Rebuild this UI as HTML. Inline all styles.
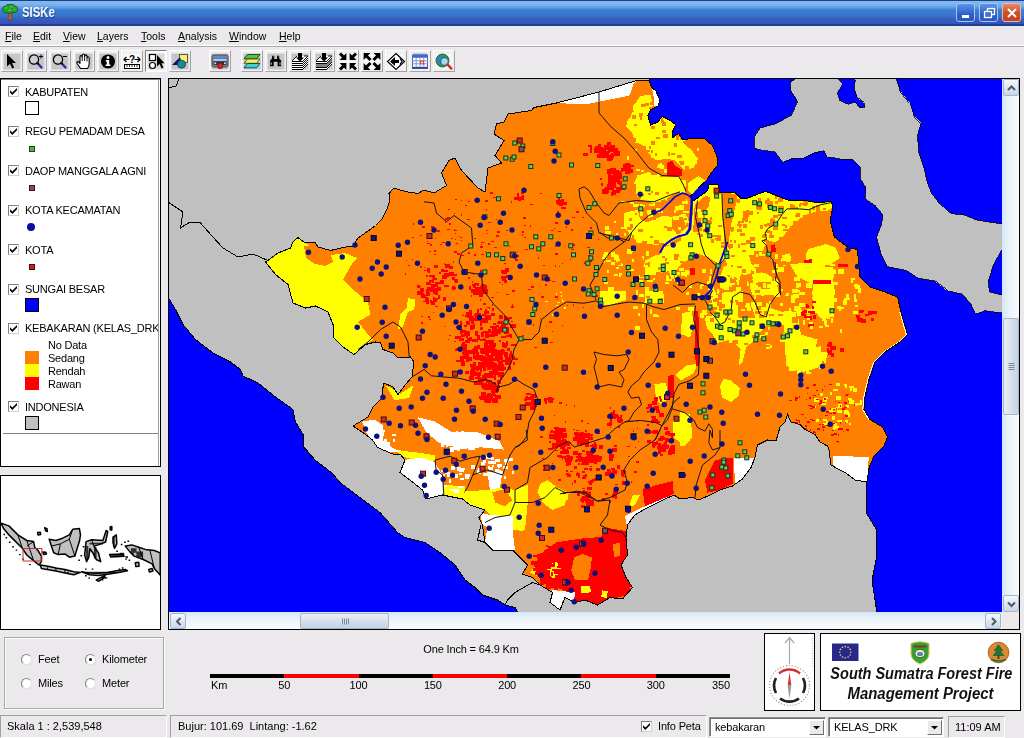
<!DOCTYPE html>
<html>
<head>
<meta charset="utf-8">
<title>SISKe</title>
<style>
html,body{margin:0;padding:0;}
body{width:1024px;height:738px;overflow:hidden;background:#ece9ec;font-family:"Liberation Sans",sans-serif;font-size:11px;color:#000;position:relative;}
.abs{position:absolute;}
#title{left:0;top:0;width:1024px;height:26px;background:linear-gradient(to bottom,#1e3e8c 0px,#1e3e8c 1px,#80bcee 1px,#78b2ec 5px,#5a9ae6 8px,#3c80d2 10px,#3472c8 17px,#3a5ec2 18.5px,#3454b4 24px,#1e3e94 24px,#1e3e94 26px);}
#title .cap{left:22px;top:4px;font-family:"Liberation Sans",sans-serif;font-weight:bold;font-size:14px;color:#fff;text-shadow:1px 1px 1px #1a3c8c;transform:scaleX(0.81);transform-origin:0 0;}
#menu{left:0;top:26px;width:1024px;height:20px;background:#ece9ec;}
#menu span{position:absolute;top:3.5px;font-size:10.5px;}
#menu u{text-decoration:underline;}
#mline{left:0;top:45px;width:1024px;height:1px;background:#fff;box-shadow:0 1px 0 #aaa8aa;}
.tb{position:absolute;top:50px;width:22px;height:22px;background:#f0eef0;border:1px solid;border-color:#fff #a4a4a4 #a4a4a4 #fff;box-sizing:border-box;}
.tb svg{position:absolute;left:0;top:0.5px;}
.panel{position:absolute;background:#fff;border:1px solid #000;box-sizing:border-box;}
.lg{position:absolute;left:24px;font-size:11px;white-space:nowrap;letter-spacing:-0.22px;margin-top:1px;}
.cb{position:absolute;left:7px;width:9px;height:9px;margin-top:1px;background:#fff;border:1px solid;border-color:#808080 #d4d0c8 #d4d0c8 #808080;}
.cb svg{position:absolute;left:0px;top:0px;}
.sw{position:absolute;left:24px;width:12px;height:12px;border:1px solid #000;box-sizing:border-box;}
.rad{position:absolute;width:11px;height:11px;border-radius:50%;background:#fff;border:1px solid;border-color:#808080 #e0e0e0 #e0e0e0 #808080;box-sizing:border-box;}
.st{position:absolute;top:715px;height:23px;border:1px solid;border-color:#a0a0a0 #fff #fff #a0a0a0;box-sizing:border-box;background:#ece9ec;}
.st span{position:absolute;top:4px;font-size:11px;white-space:nowrap;}
.lb{font-size:11px;white-space:nowrap;letter-spacing:-0.15px;}
.lt{position:absolute;left:0;width:199px;text-align:center;font-weight:bold;font-style:italic;font-size:16px;white-space:nowrap;color:#111;}
.tbp{background:#fafafa;border-color:#808080 #fff #fff #808080;}
.sbb{position:absolute;width:16px;height:16px;box-sizing:border-box;border:1px solid #a8b4c8;border-radius:2px;background:linear-gradient(to bottom,#f4f8fc,#c8d6e8);overflow:hidden;}
.sbb svg{position:absolute;left:0;top:0;}
.wb{top:3px;width:19px;height:19px;box-sizing:border-box;border:1px solid #a8c4f0;border-radius:3px;background:linear-gradient(to bottom,#5c94e8,#2c60c8 60%,#2858c0);overflow:hidden}
#menu,#legend,#bottom,#title .cap{will-change:transform;}
</style>
</head>
<body>
<!-- TITLE -->
<div id="title" class="abs">
<svg class="abs" style="left:1px;top:3px" width="18" height="18" viewBox="0 0 18 18"><path d="M8 9 L7 17 H11 L10.3 9 Z" fill="#b06830" stroke="#603010" stroke-width="0.6"/><path d="M1.5 7 Q1 3.5 4.5 3 Q6 0.8 9 1.5 Q12.5 0.5 14 3 Q17.5 3.5 16.5 7.5 Q15.5 10.5 12 9.5 Q9 11 6.5 9.8 Q2.5 10.5 1.5 7Z" fill="#28a028" stroke="#0c500c" stroke-width="0.7"/><path d="M4 5.5 Q5 4 6.5 5 M9 4 Q10.5 3 11.5 4.5 M7 7.5 Q8.5 6.5 10 7.5 M12.5 6.5 Q13.5 5.5 14.5 6.8" stroke="#70d860" stroke-width="0.9" fill="none"/></svg><span class="cap abs">SISKe</span>
<div class="abs wb" style="left:956px;"><div class="abs" style="left:5px;top:11px;width:7px;height:3px;background:#fff"></div></div>
<div class="abs wb" style="left:979px;"><svg width="19" height="19" class="abs" style="left:0;top:0"><rect x="7.5" y="4.5" width="7" height="6" fill="none" stroke="#fff" stroke-width="1.3"/><rect x="4.5" y="7.5" width="7" height="6" fill="#3c74d0" stroke="#fff" stroke-width="1.3"/></svg></div>
<div class="abs wb" style="left:1002px;background:linear-gradient(to bottom,#e88868,#d0502c 50%,#c04020);border-color:#f0b8a0;"><svg width="19" height="19" class="abs" style="left:0;top:0"><path d="M5 5 L13 13 M13 5 L5 13" stroke="#fff" stroke-width="2"/></svg></div>
</div>
<!-- MENU -->
<div id="menu" class="abs">
<span style="left:5px"><u>F</u>ile</span>
<span style="left:33px"><u>E</u>dit</span>
<span style="left:63px"><u>V</u>iew</span>
<span style="left:97px"><u>L</u>ayers</span>
<span style="left:141px"><u>T</u>ools</span>
<span style="left:178px"><u>A</u>nalysis</span>
<span style="left:229px"><u>W</u>indow</span>
<span style="left:279px"><u>H</u>elp</span>
</div>
<div id="mline" class="abs"></div>
<!-- TOOLBAR -->
<div id="toolbar">
<div class="tb" style="left:1px"><svg width="20" height="19" viewBox="0 0 20 19"><rect x="1.5" y="1.5" width="17" height="16" fill="#c6c6c6"/><path d="M5 2 L5 14.5 L8 11.8 L10.2 16.5 L12.2 15.6 L10 11 L14 11 Z" fill="#000"/></svg></div>
<div class="tb" style="left:25px"><svg width="20" height="19" viewBox="0 0 20 19"><rect x="1.5" y="1.5" width="17" height="16" fill="#c6c6c6"/><circle cx="8" cy="7.5" r="4.6" fill="#d0d0d0" stroke="#000" stroke-width="1.3"/><path d="M11.2 10.8 L15.5 15.5" stroke="#2828a0" stroke-width="2.2" stroke-linecap="round"/><path d="M11 10.6 L12.5 12.2" stroke="#000" stroke-width="1.6"/><path d="M13 4.5 H17 M15 2.5 V6.5" stroke="#000" stroke-width="1"/></svg></div>
<div class="tb" style="left:49px"><svg width="20" height="19" viewBox="0 0 20 19"><rect x="1.5" y="1.5" width="17" height="16" fill="#c6c6c6"/><circle cx="8" cy="7.5" r="4.6" fill="#d0d0d0" stroke="#000" stroke-width="1.3"/><path d="M11.2 10.8 L15.5 15.5" stroke="#2828a0" stroke-width="2.2" stroke-linecap="round"/><path d="M11 10.6 L12.5 12.2" stroke="#000" stroke-width="1.6"/><path d="M13 4.5 H17" stroke="#000" stroke-width="1"/></svg></div>
<div class="tb" style="left:73px"><svg width="20" height="19" viewBox="0 0 20 19"><rect x="1.5" y="1.5" width="17" height="16" fill="#c6c6c6"/><path d="M6.5 16.5 L3.2 11.5 Q2.4 9.8 3.8 9.6 Q5 9.6 6 11.5 L6 5 Q6 3.6 7.1 3.6 Q8.2 3.6 8.2 5 L8.2 3.4 Q8.3 2 9.4 2 Q10.6 2 10.6 3.4 L10.7 4.2 Q10.8 2.9 11.9 2.9 Q13 3 13 4.4 L13 5.8 Q13.2 4.7 14.2 4.8 Q15.2 5 15.2 6.4 L15.2 11.5 Q15.2 14 13.6 16.5 Z" fill="#fff" stroke="#000" stroke-width="1.1" stroke-linejoin="round"/><path d="M8.2 5 V9 M10.6 4 V9 M13 5.6 V9.4" stroke="#000" stroke-width="0.9"/></svg></div>
<div class="tb" style="left:97px"><svg width="20" height="19" viewBox="0 0 20 19"><rect x="1.5" y="1.5" width="17" height="16" fill="#c6c6c6"/><circle cx="10" cy="9.5" r="7" fill="#000"/><circle cx="10" cy="5.6" r="1.5" fill="#fff"/><path d="M7.8 8 H11.2 V12.6 H12.4 V14 H7.6 V12.6 H8.8 V9.4 H7.8 Z" fill="#fff"/></svg></div>
<div class="tb" style="left:121px"><svg width="20" height="19" viewBox="0 0 20 19"><rect x="1.5" y="1.5" width="17" height="16" fill="#f8f8f8"/><path d="M2 7.5 H7.5 M12.5 7.5 H18" stroke="#000" stroke-width="1.2"/><path d="M4.5 5 L2 7.5 L4.5 10 M15.5 5 L18 7.5 L15.5 10" fill="none" stroke="#000" stroke-width="1.2"/><text x="10" y="10.5" font-family="Liberation Sans,sans-serif" font-weight="bold" font-size="10" text-anchor="middle" fill="#000">?</text><rect x="2.5" y="12.5" width="15" height="4" fill="#fff" stroke="#000" stroke-width="1"/><path d="M5 12.5 V15 M7.5 12.5 V15 M10 12.5 V15 M12.5 12.5 V15 M15 12.5 V15" stroke="#000" stroke-width="0.8"/></svg></div>
<div class="tb tbp" style="left:145px"><svg width="20" height="19" viewBox="0 0 20 19"><rect x="1.5" y="1.5" width="17" height="16" fill="#d8d8d8"/><rect x="3.5" y="2.5" width="6" height="6" fill="#fff" stroke="#000" stroke-width="1.2"/><circle cx="6.5" cy="13.5" r="3" fill="#fff" stroke="#000" stroke-width="1.2"/><path d="M11 3 L11 14.5 L13.6 12 L15.6 16.5 L17.4 15.6 L15.4 11.3 L18.6 11.3 Z" fill="#000"/></svg></div>
<div class="tb" style="left:169px"><svg width="20" height="19" viewBox="0 0 20 19"><rect x="1.5" y="1.5" width="17" height="16" fill="#c6c6c6"/><rect x="9.5" y="2.5" width="8" height="8" fill="#f4f080" stroke="#404000" stroke-width="0.8"/><path d="M2 13 L10 5 L12 13 Z" fill="#101070"/><circle cx="11.5" cy="12.2" r="4" fill="#1c8c94" stroke="#0a3c50" stroke-width="0.8"/></svg></div>
<div class="tb" style="left:209px"><svg width="20" height="19" viewBox="0 0 20 19"><rect x="1.5" y="1.5" width="17" height="16" fill="#c6c6c6"/><rect x="2" y="3" width="16" height="12" rx="1.5" fill="#8c8c94" stroke="#404048" stroke-width="1"/><rect x="3.5" y="4.5" width="13" height="4.5" fill="#4c86d8"/><rect x="3.5" y="7" width="13" height="2.2" fill="#a8c8f0"/><rect x="3.5" y="9.2" width="13" height="4" fill="#30303c"/><rect x="8" y="11" width="4.5" height="5.5" rx="1" fill="#d02828" stroke="#600" stroke-width="0.6"/><circle cx="5.3" cy="11.3" r="1" fill="#ddd"/><circle cx="15" cy="11.3" r="1" fill="#ddd"/></svg></div>
<div class="tb" style="left:241px"><svg width="20" height="19" viewBox="0 0 20 19"><rect x="1.5" y="1.5" width="17" height="16" fill="#c6c6c6"/><path d="M5.5 2.5 H18 L14.5 6.8 H2 Z" fill="#58c058" stroke="#0a400a" stroke-width="0.9"/><path d="M5.5 7 H18 L14.5 11.3 H2 Z" fill="#f0f060" stroke="#505000" stroke-width="0.9"/><path d="M5.5 11.5 H18 L14.5 15.8 H2 Z" fill="#40d0d8" stroke="#004850" stroke-width="0.9"/></svg></div>
<div class="tb" style="left:265px"><svg width="20" height="19" viewBox="0 0 20 19"><rect x="1.5" y="1.5" width="17" height="16" fill="#c6c6c6"/><path d="M6.1 3.8 H8.3 V6.5 L7.7 7.1 H11.6 L11 6.5 V3.8 H13.2 V6.5 L15.1 8.5 V14.2 H11.6 V9.8 H7.7 V14.2 H4.1 V8.5 L6.1 6.5 Z" fill="#000"/><path d="M5.2 10.5 V12.8 M14 10.5 V12.8" stroke="#fff" stroke-width="0.8"/><path d="M7 4.6 H7.6 M11.8 4.6 H12.4" stroke="#fff" stroke-width="0.6"/></svg></div>
<div class="tb" style="left:289px"><svg width="20" height="19" viewBox="0 0 20 19"><rect x="1.5" y="1.5" width="17" height="16" fill="#c6c6c6"/><g shape-rendering="crispEdges"><path d="M2 9 L7 4 H18 V12 L13 17 H2 Z" fill="#fff"/><path d="M2 9 H13" fill="none" stroke="#000" stroke-width="1"/><path d="M2 11 H13" fill="none" stroke="#000" stroke-width="1"/><path d="M2 13 H13" fill="none" stroke="#000" stroke-width="1"/><path d="M2 15 H13" fill="none" stroke="#000" stroke-width="1"/><path d="M2 17 H13" fill="none" stroke="#000" stroke-width="1"/></g><path d="M13 9 L18 4" fill="none" stroke="#000" stroke-width="0.9"/><path d="M13 11 L18 6" fill="none" stroke="#000" stroke-width="0.9"/><path d="M13 13 L18 8" fill="none" stroke="#000" stroke-width="0.9"/><path d="M13 15 L18 10" fill="none" stroke="#000" stroke-width="0.9"/><path d="M13 17 L18 12" fill="none" stroke="#000" stroke-width="0.9"/><path d="M2 9 L7 4 M14 4 H18" fill="none" stroke="#000" stroke-width="0.9"/><path d="M8 1 H12 V5.5 H14 L10 9.5 L6 5.5 H8 Z" fill="#000"/></svg></div>
<div class="tb" style="left:313px"><svg width="20" height="19" viewBox="0 0 20 19"><rect x="1.5" y="1.5" width="17" height="16" fill="#c6c6c6"/><g shape-rendering="crispEdges"><path d="M2 9 L7 4 H18 V12 L13 17 H2 Z" fill="#fff"/><path d="M2 11 H13 L18 6 V10 L13 15 H2 Z" fill="#808080"/><path d="M2 9 H13" fill="none" stroke="#000" stroke-width="1"/><path d="M2 11 H13" fill="none" stroke="#000" stroke-width="1"/><path d="M2 15 H13" fill="none" stroke="#000" stroke-width="1"/><path d="M2 17 H13" fill="none" stroke="#000" stroke-width="1"/></g><path d="M13 9 L18 4" fill="none" stroke="#000" stroke-width="0.9"/><path d="M13 11 L18 6" fill="none" stroke="#000" stroke-width="0.9"/><path d="M13 15 L18 10" fill="none" stroke="#000" stroke-width="0.9"/><path d="M13 17 L18 12" fill="none" stroke="#000" stroke-width="0.9"/><path d="M2 9 L7 4 M14 4 H18" fill="none" stroke="#000" stroke-width="0.9"/><path d="M8 1 H12 V5.5 H14 L10 9.5 L6 5.5 H8 Z" fill="#000"/></svg></div>
<div class="tb" style="left:337px"><svg width="20" height="19" viewBox="0 0 20 19"><rect x="1.5" y="1.5" width="17" height="16" fill="#f6f6f6"/><path d="M2 1.5 L6 5.5" stroke="#000" stroke-width="3"/><path d="M8.4 7.9 L1.6 7.9 L8.4 1.1 Z" fill="#000"/><path d="M18 1.5 L14 5.5" stroke="#000" stroke-width="3"/><path d="M11.6 7.9 L18.4 7.9 L11.6 1.1 Z" fill="#000"/><path d="M2 17.5 L6 13.5" stroke="#000" stroke-width="3"/><path d="M8.4 11.1 L1.6 11.1 L8.4 17.9 Z" fill="#000"/><path d="M18 17.5 L14 13.5" stroke="#000" stroke-width="3"/><path d="M11.6 11.1 L18.4 11.1 L11.6 17.9 Z" fill="#000"/></svg></div>
<div class="tb" style="left:361px"><svg width="20" height="19" viewBox="0 0 20 19"><rect x="1.5" y="1.5" width="17" height="16" fill="#f6f6f6"/><path d="M8.5 8 L4 3.5" stroke="#000" stroke-width="3"/><path d="M1.6 1.1 L8.4 1.1 L1.6 7.9 Z" fill="#000"/><path d="M11.5 8 L16 3.5" stroke="#000" stroke-width="3"/><path d="M18.4 1.1 L11.6 1.1 L18.4 7.9 Z" fill="#000"/><path d="M8.5 11 L4 15.5" stroke="#000" stroke-width="3"/><path d="M1.6 17.9 L8.4 17.9 L1.6 11.1 Z" fill="#000"/><path d="M11.5 11 L16 15.5" stroke="#000" stroke-width="3"/><path d="M18.4 17.9 L11.6 17.9 L18.4 11.1 Z" fill="#000"/></svg></div>
<div class="tb" style="left:385px"><svg width="20" height="19" viewBox="0 0 20 19"><rect x="1.5" y="1.5" width="17" height="16" fill="#f6f6f6"/><path d="M10 1.5 L18.5 9.5 L10 17.5 L1.5 9.5 Z" fill="#fff" stroke="#000" stroke-width="1.2"/><path d="M4 9.5 L9 5 V8 H13 V11 H9 V14 Z" fill="#000"/><path d="M14 6.5 L16 9.5 L14 12.5" fill="none" stroke="#000" stroke-width="1.2"/></svg></div>
<div class="tb" style="left:409px"><svg width="20" height="19" viewBox="0 0 20 19"><rect x="1.5" y="1.5" width="17" height="16" fill="#f6f6f6"/><rect x="2.5" y="3" width="15" height="13.5" fill="#fff" stroke="#5068a8" stroke-width="1"/><rect x="2.5" y="3" width="15" height="2.8" fill="#3c6cd0"/><path d="M3.5 2.2 H16.5" stroke="#4a5c90" stroke-width="1.4" stroke-dasharray="1 1"/><rect x="2.5" y="14.8" width="15" height="2" fill="#2c4ca0"/><path d="M2.5 8.8 H17.5 M2.5 11.8 H17.5 M6.2 5.8 V14.8 M10 5.8 V14.8 M13.8 5.8 V14.8" stroke="#8098d0" stroke-width="1"/><rect x="10.6" y="9.2" width="3" height="2.6" fill="#fff" stroke="#e03030" stroke-width="1"/></svg></div>
<div class="tb" style="left:433px"><svg width="20" height="19" viewBox="0 0 20 19"><rect x="1.5" y="1.5" width="17" height="16" fill="#f6f6f6"/><circle cx="8.5" cy="8.5" r="6.5" fill="#2c9848" stroke="#185028" stroke-width="0.8"/><path d="M4 5 Q7 3 9 5.5 Q11 8 8 9 Q5 9.5 4.5 12 Q2.5 9 4 5Z" fill="#3878d8"/><path d="M10 10 Q13 9 14 11 Q13 14 10.5 14.5Z" fill="#3878d8"/><circle cx="10.5" cy="9.5" r="3.8" fill="#bfe4f4" fill-opacity="0.85" stroke="#207088" stroke-width="1.2"/><path d="M13.4 12.4 L17.4 16.6" stroke="#c83020" stroke-width="2.4" stroke-linecap="round"/></svg></div>
</div>
<!-- LEGEND -->
<div class="panel" id="legend" style="left:0;top:78px;width:161px;height:389px;overflow:hidden;">
<div class="cb" style="top:6px"><svg width="9" height="9" viewBox="0 0 9 9"><path d="M1 3.2 L3.3 5.6 L8 1 V3.2 L3.3 7.9 L1 5.6 Z" fill="#000"/></svg></div>
<div class="lg" style="top:5.5px">KABUPATEN</div>
<div class="cb" style="top:45.5px"><svg width="9" height="9" viewBox="0 0 9 9"><path d="M1 3.2 L3.3 5.6 L8 1 V3.2 L3.3 7.9 L1 5.6 Z" fill="#000"/></svg></div>
<div class="lg" style="top:45px">REGU PEMADAM DESA</div>
<div class="cb" style="top:85px"><svg width="9" height="9" viewBox="0 0 9 9"><path d="M1 3.2 L3.3 5.6 L8 1 V3.2 L3.3 7.9 L1 5.6 Z" fill="#000"/></svg></div>
<div class="lg" style="top:84.5px">DAOP MANGGALA AGNI</div>
<div class="cb" style="top:124.5px"><svg width="9" height="9" viewBox="0 0 9 9"><path d="M1 3.2 L3.3 5.6 L8 1 V3.2 L3.3 7.9 L1 5.6 Z" fill="#000"/></svg></div>
<div class="lg" style="top:124px">KOTA KECAMATAN</div>
<div class="cb" style="top:164px"><svg width="9" height="9" viewBox="0 0 9 9"><path d="M1 3.2 L3.3 5.6 L8 1 V3.2 L3.3 7.9 L1 5.6 Z" fill="#000"/></svg></div>
<div class="lg" style="top:163.5px">KOTA</div>
<div class="cb" style="top:203.5px"><svg width="9" height="9" viewBox="0 0 9 9"><path d="M1 3.2 L3.3 5.6 L8 1 V3.2 L3.3 7.9 L1 5.6 Z" fill="#000"/></svg></div>
<div class="lg" style="top:203px">SUNGAI BESAR</div>
<div class="cb" style="top:242.5px"><svg width="9" height="9" viewBox="0 0 9 9"><path d="M1 3.2 L3.3 5.6 L8 1 V3.2 L3.3 7.9 L1 5.6 Z" fill="#000"/></svg></div>
<div class="lg" style="top:242px">KEBAKARAN (KELAS_DRK</div>
<div class="cb" style="top:321px"><svg width="9" height="9" viewBox="0 0 9 9"><path d="M1 3.2 L3.3 5.6 L8 1 V3.2 L3.3 7.9 L1 5.6 Z" fill="#000"/></svg></div>
<div class="lg" style="top:320.5px">INDONESIA</div>
<div class="sw" style="top:22px;width:14px;height:14px;background:#fff"></div>
<div class="sw" style="top:67px;left:28px;width:6px;height:6px;background:#40c040;border-color:#204020"></div>
<div class="sw" style="top:106px;left:28px;width:6px;height:6px;background:#8c4858;border-color:#301820"></div>
<div style="position:absolute;left:26px;top:144px;width:8px;height:8px;border-radius:50%;background:#0c0ca0;"></div>
<div class="sw" style="top:185px;left:28px;width:6px;height:6px;background:#c82020;border-color:#401010"></div>
<div class="sw" style="top:219px;width:14px;height:14px;background:#0000ff"></div>
<div class="lg" style="left:47px;top:259px">No Data</div>
<div class="lg" style="left:47px;top:272px">Sedang</div>
<div style="position:absolute;left:24px;top:271.5px;width:14px;height:13px;background:#ff8000"></div>
<div class="lg" style="left:47px;top:285px">Rendah</div>
<div style="position:absolute;left:24px;top:284.5px;width:14px;height:13px;background:#ffff00"></div>
<div class="lg" style="left:47px;top:298px">Rawan</div>
<div style="position:absolute;left:24px;top:297.5px;width:14px;height:13px;background:#ff0000"></div>
<div class="sw" style="top:337px;width:14px;height:14px;background:#c0c0c0"></div>
<div style="position:absolute;left:2px;top:354px;width:155px;height:1px;background:#808080"></div>
<div style="position:absolute;left:0;top:0;right:0;height:1px;background:#808080"></div>
<div style="position:absolute;top:0;right:1px;bottom:0;width:1px;background:#a0a0a0"></div>
</div>
<!-- OVERVIEW -->
<div class="panel" id="overview" style="left:0;top:475px;width:161px;height:155px;overflow:hidden"><svg width="159" height="153" viewBox="1 476 159 153" style="position:absolute;left:0;top:0">
<polygon points="1.1,523.2 8.9,525.9 17.9,534.9 26.8,540.5 33.6,541.6 34.7,547.2 38.0,550.5 41.4,556.1 41.4,561.7 39.1,565.1 33.6,560.6 26.8,555.0 22.4,548.3 15.7,541.6 8.9,534.9 3.4,528.2" fill="#c0c0c0" stroke="#000" stroke-width="1.5" stroke-linejoin="round"/>
<polygon points="40.3,565.1 48.1,566.2 55.9,568.0 64.9,569.5 73.8,571.8 80.5,572.4 73.8,574.7 64.9,572.9 55.9,571.1 47.0,569.5 41.4,568.4" fill="#c0c0c0" stroke="#000" stroke-width="1.5" stroke-linejoin="round"/>
<polygon points="49.2,539.3 55.9,540.5 62.6,538.2 69.3,534.9 72.7,529.3 79.4,528.6 80.5,534.9 79.4,541.6 77.2,548.3 74.9,556.1 69.3,557.2 64.9,553.9 58.2,554.6 53.7,552.8 51.4,546.1" fill="#c0c0c0" stroke="#000" stroke-width="1.5" stroke-linejoin="round"/>
<polygon points="86.1,541.6 91.7,539.8 102.9,540.5 106.2,530.4 107.8,531.5 105.6,542.0 98.4,544.9 93.9,546.1 98.4,552.8 100.7,561.7 96.2,559.5 92.8,552.8 89.9,548.7 88.8,557.2 86.6,561.7 84.6,555.0" fill="#c0c0c0" stroke="#000" stroke-width="1.5" stroke-linejoin="round"/>
<polygon points="113.0,537.1 116.3,534.9 116.8,543.8 114.5,548.3 113.0,542.7" fill="#c0c0c0" stroke="#000" stroke-width="1.5" stroke-linejoin="round"/>
<polygon points="109.6,554.6 123.0,553.9 124.1,556.3 110.7,557.0" fill="#c0c0c0" stroke="#000" stroke-width="1.5" stroke-linejoin="round"/>
<polygon points="125.3,546.1 132.0,544.9 138.7,547.2 145.4,549.4 154.3,550.5 160.2,552.8 160.2,575.1 154.3,568.4 152.1,563.9 143.2,559.5 134.2,556.1 129.7,551.6" fill="#c0c0c0" stroke="#000" stroke-width="1.5" stroke-linejoin="round"/>
<polygon points="81.6,571.8 89.5,572.9 98.4,573.3 107.4,572.4 116.3,570.7 125.3,569.5 127.5,570.7 118.6,572.4 107.4,574.2 98.4,575.6 89.5,574.7" fill="#c0c0c0" stroke="#000" stroke-width="1.5" stroke-linejoin="round"/>
<polygon points="96.2,580.1 105.1,575.1 104.5,577.4 98.9,581.2" fill="#c0c0c0" stroke="#000" stroke-width="1.5" stroke-linejoin="round"/>
<polygon points="42.9,551.9 45.9,552.3 46.5,554.1 43.8,554.6" fill="#c0c0c0" stroke="#000" stroke-width="1.5" stroke-linejoin="round"/>
<polygon points="135.3,562.8 138.7,562.2 139.1,566.2 135.8,566.6" fill="#c0c0c0" stroke="#000" stroke-width="1.5" stroke-linejoin="round"/>
<polygon points="148.8,569.5 152.1,568.4 153.0,571.1 149.4,572.0" fill="#c0c0c0" stroke="#000" stroke-width="1.5" stroke-linejoin="round"/>
<polygon points="44.7,527.7 47.0,528.6 47.4,531.5 45.6,530.8" fill="#c0c0c0" stroke="#000" stroke-width="1.5" stroke-linejoin="round"/>
<polygon points="37.6,532.6 40.3,532.2 40.7,534.4 38.0,534.9" fill="#c0c0c0" stroke="#000" stroke-width="1.5" stroke-linejoin="round"/>
<polygon points="110.1,527.0 111.8,526.4 111.8,529.9 110.3,529.9" fill="#c0c0c0" stroke="#000" stroke-width="1.5" stroke-linejoin="round"/>
<polyline points="17.9,534.9 22.4,548.3" fill="none" stroke="#000" stroke-width="1"/>
<polyline points="26.8,540.5 33.6,560.6" fill="none" stroke="#000" stroke-width="1"/>
<polyline points="33.6,541.6 26.8,546.1" fill="none" stroke="#000" stroke-width="1"/>
<polyline points="58.2,554.6 60.4,543.8 69.3,539.3 72.7,529.3" fill="none" stroke="#000" stroke-width="1"/>
<polyline points="69.3,539.3 74.9,556.1" fill="none" stroke="#000" stroke-width="1"/>
<polyline points="51.4,546.1 60.4,543.8" fill="none" stroke="#000" stroke-width="1"/>
<polyline points="48.1,566.2 47.4,569.5" fill="none" stroke="#000" stroke-width="1"/>
<polyline points="55.9,568.0 55.9,571.1" fill="none" stroke="#000" stroke-width="1"/>
<polyline points="64.9,569.5 64.9,572.9" fill="none" stroke="#000" stroke-width="1"/>
<polyline points="138.7,547.2 143.2,559.5" fill="none" stroke="#000" stroke-width="1"/>
<polyline points="149.9,550.1 154.3,568.4" fill="none" stroke="#000" stroke-width="1"/>
<polyline points="91.7,539.8 93.9,546.1" fill="none" stroke="#000" stroke-width="1"/>
<path d="M3.4 533.8h1.6v1.4h-1.6zM5.6 537.1h1.6v1.4h-1.6zM8.9 541.6h1.6v1.4h-1.6zM12.3 546.1h1.6v1.4h-1.6zM15.7 549.4h1.6v1.4h-1.6zM19.0 553.9h1.6v1.4h-1.6zM22.4 558.4h1.6v1.4h-1.6zM29.1 563.9h1.6v1.4h-1.6zM85.0 575.1h1.6v1.4h-1.6zM88.4 577.4h1.6v1.4h-1.6zM91.7 568.4h1.6v1.4h-1.6zM101.8 579.2h1.6v1.4h-1.6zM118.6 568.4h1.6v1.4h-1.6zM121.9 567.3h1.6v1.4h-1.6zM125.3 558.4h1.6v1.4h-1.6zM128.6 559.5h1.6v1.4h-1.6zM132.0 552.8h1.6v1.4h-1.6zM116.3 550.5h1.6v1.4h-1.6zM120.8 543.8h1.6v1.4h-1.6zM124.1 541.6h1.6v1.4h-1.6zM127.5 540.5h1.6v1.4h-1.6zM85.0 568.4h1.6v1.4h-1.6zM67.1 571.8h1.6v1.4h-1.6zM78.3 559.5h1.6v1.4h-1.6zM80.5 555.0h1.6v1.4h-1.6zM82.8 546.1h1.6v1.4h-1.6z" fill="#000"/>
<rect x="23" y="548.5" width="18.8" height="12.5" fill="none" stroke="#c83030" stroke-width="1"/>
<path d="M89.5 542.7h13.4v1.8h-13.4zM86.1 546.1h2.2v13.4h-2.2zM93.9 547.2h2.7v11.2h-2.7zM111.2 553.9h12.3v2.2h-12.3zM113.0 536.0h1.8v11.2h-1.8zM136.4 551.6h6.7v5.6h-6.7zM130.9 548.3h5.6v4.5h-5.6zM87.2 571.8h33.6v1.3h-33.6zM101.8 576.9h5.6v1.8h-5.6zM119.7 552.8h4.5v1.8h-4.5zM125.3 556.1h2.7v2.2h-2.7z" fill="#000" fill-opacity="0.75"/></svg></div>
<!-- MAP -->
<div class="panel" id="mapwrap" style="left:168px;top:78px;width:852px;height:552px;background:#ece9ec;">
<svg style="position:absolute;left:0;top:0" width="833" height="533" viewBox="169 79 833 533" shape-rendering="crispEdges">
<rect x="168" y="78" width="840" height="540" fill="#0000ff"/>
<polygon points="168,78 649,78 651.6,87.4 656,91 660,100.5 658,106 650.6,110 647.8,115.5 650.6,125 658,122 662,116.4 669.4,120 676,125 672,131.4 672,138 678.8,133.3 682.5,140 693.8,138 705,139 712.5,145.5 717,156.8 717,166 710.6,173.6 707,180 699.4,186.8 695.6,192.4 690,196 693.8,200.5 701,195.5 707.8,190.5 708.8,185 718,184 720,192.4 735,192.4 740.6,198 748,198 765,191.4 772.5,194 787.5,200 805,200.5 820,203 831,201 833,207.4 830,220 834.4,237 848,247.5 857.6,249.6 858.6,264.4 860,277 870,287 885,292 897.5,297 901,312 907.5,334.5 900,342 885,352 875,362 869,379.5 865,397 864,409.5 870,419.5 882.5,427 887.5,437 884,446 874,456 869,468 867,482 866,486 866,512 876,529 877,555 872,580 877,613 518.5,613 515,607.5 505,605 497.5,600 482.5,595 475,587.5 465,580 455,565 440,552.5 425,542.5 405,537.5 397.5,532.5 380,512.5 360,497.5 340,482.5 331.9,473 315,460 303,446 303,434.5 295.5,422 293,409.5 275.5,397 258,383 243,376 240.5,369.5 230.5,362 213,353 195.5,339.5 183,324.5 175.5,309.5 168,297" fill="#c0c0c0" stroke="#000" stroke-width="1"/>
<polygon points="796,78 790,83 791,90.5 797.5,100.5 791,115.5 775,124 760,128 754,137 754,148 762.5,150.5 775,152 782.5,162 792.5,158 802.5,158 812.5,153 824,150.5 827.5,157 840,159 852.5,159 860,167 860,178 866,188 865,199 875.5,206 883,215 881,226 876.5,237 881,254 887,266.5 907,270.7 917.7,278 934.5,281 947,290.7 962,294 971.5,304.5 975.7,314 985,310.8 1002,313 1002,295 989.4,291.8 988.3,281 993.6,264.4 1002,249.6 1002,224 976.7,220 964,214.8 951.4,213.7 938.8,203 931.4,192.7 927.5,183 924,168 919,153 917.5,135.5 921,123 914,115.5 910,103 900,90.5 896,78 852.5,78 855,80.5 854,88 857.5,98 864,103 865,107 860,108 855,102 847.5,104 840,100.5 837.5,93 842.5,84 837.5,78" fill="#c0c0c0" stroke="#000" stroke-width="0.8"/>
<polygon points="268,260.5 278,253 290.5,248 293,242 298,237.5 304,242 315.5,243 318,247 330.5,250.5 343,247.5 353,246 358,238 368,231 375.5,225.5 382,219 387,209 390,200.5 389,193.5 394,188 402,190.5 408,192 418,193.5 424,190 434,193 446.5,185.5 441.5,173 449,160.5 455,158 461.5,170.5 478,188 485,192 488,168 501.5,163 495,155.5 504,140.5 494,134 496.5,124 504,122 508,114 531.5,110.5 534,107.5 556.5,103 599,92 636.5,80.5 649,80.5 651.6,87.4 656,91 660,100.5 658,106 650.6,110 647.8,115.5 650.6,125 658,122 662,116.4 669.4,120 676,125 672,131.4 672,138 678.8,133.3 682.5,140 693.8,138 705,139 712.5,145.5 717,156.8 717,166 710.6,173.6 707,180 699.4,186.8 695.6,192.4 690,196 693.8,200.5 701,195.5 707.8,190.5 708.8,185 718,184 720,192.4 735,192.4 740.6,198 748,198 765,191.4 772.5,194 787.5,200 805,200.5 820,203 831,201 833,207.4 830,220 834.4,237 848,247.5 857.6,249.6 858.6,264.4 860,277 870,287 885,292 897.5,297 901,312 907.5,334.5 900,342 885,352 875,362 869,379.5 865,397 864,409.5 870,419.5 882.5,427 887.5,437 884,446 874,456 869,468 867,482 855,480 846,473 838,469 831,465 829,450 827.5,446 820,442 815,434.5 805,429.5 800,424.5 791,422 787.5,414.5 785,422 780,427 776,441 767.5,440 757.5,445 755,457.5 751,467.5 742.5,479 732.5,486 720,490 710,495 699,500 692.5,497.5 680,499 674,495 665,499 655,504 645,509 635,515 627.5,525 626,537.5 627.5,555 621,565 626,577.5 632.5,587.5 622.5,599 610,597.5 597.5,605 585,600 575,602.5 565,597.5 560,610 550,602.5 552.5,592.5 540,585 532.5,577.5 522.5,574 527.5,565 520,557.5 512.5,550 492.5,550 485,542.5 482.5,525 479,517.5 485,510 470,505 462.5,499 442.5,495 426,499 422.5,490 410,480 400,472.5 405,460 400,454 395,455 377.5,447.5 372.5,440 365,434 353,426 368,417 373,407 383,397 382,392 384,383 393,387 398,394.5 405.5,384.5 412,377 414,362 410.5,357 398,358 393,353 383,349.5 380.5,343 375.5,342 365.5,344.5 354,354.5 343,347 333,337 333,324.5 328,312 315.5,306 305.5,308 293,303 288,284.5 275.5,274.5 265.5,262" fill="#ff8000" stroke="#000" stroke-width="1"/>
<clipPath id="pc"><polygon points="268,260.5 278,253 290.5,248 293,242 298,237.5 304,242 315.5,243 318,247 330.5,250.5 343,247.5 353,246 358,238 368,231 375.5,225.5 382,219 387,209 390,200.5 389,193.5 394,188 402,190.5 408,192 418,193.5 424,190 434,193 446.5,185.5 441.5,173 449,160.5 455,158 461.5,170.5 478,188 485,192 488,168 501.5,163 495,155.5 504,140.5 494,134 496.5,124 504,122 508,114 531.5,110.5 534,107.5 556.5,103 599,92 636.5,80.5 649,80.5 651.6,87.4 656,91 660,100.5 658,106 650.6,110 647.8,115.5 650.6,125 658,122 662,116.4 669.4,120 676,125 672,131.4 672,138 678.8,133.3 682.5,140 693.8,138 705,139 712.5,145.5 717,156.8 717,166 710.6,173.6 707,180 699.4,186.8 695.6,192.4 690,196 693.8,200.5 701,195.5 707.8,190.5 708.8,185 718,184 720,192.4 735,192.4 740.6,198 748,198 765,191.4 772.5,194 787.5,200 805,200.5 820,203 831,201 833,207.4 830,220 834.4,237 848,247.5 857.6,249.6 858.6,264.4 860,277 870,287 885,292 897.5,297 901,312 907.5,334.5 900,342 885,352 875,362 869,379.5 865,397 864,409.5 870,419.5 882.5,427 887.5,437 884,446 874,456 869,468 867,482 855,480 846,473 838,469 831,465 829,450 827.5,446 820,442 815,434.5 805,429.5 800,424.5 791,422 787.5,414.5 785,422 780,427 776,441 767.5,440 757.5,445 755,457.5 751,467.5 742.5,479 732.5,486 720,490 710,495 699,500 692.5,497.5 680,499 674,495 665,499 655,504 645,509 635,515 627.5,525 626,537.5 627.5,555 621,565 626,577.5 632.5,587.5 622.5,599 610,597.5 597.5,605 585,600 575,602.5 565,597.5 560,610 550,602.5 552.5,592.5 540,585 532.5,577.5 522.5,574 527.5,565 520,557.5 512.5,550 492.5,550 485,542.5 482.5,525 479,517.5 485,510 470,505 462.5,499 442.5,495 426,499 422.5,490 410,480 400,472.5 405,460 400,454 395,455 377.5,447.5 372.5,440 365,434 353,426 368,417 373,407 383,397 382,392 384,383 393,387 398,394.5 405.5,384.5 412,377 414,362 410.5,357 398,358 393,353 383,349.5 380.5,343 375.5,342 365.5,344.5 354,354.5 343,347 333,337 333,324.5 328,312 315.5,306 305.5,308 293,303 288,284.5 275.5,274.5 265.5,262"/></clipPath>
<g clip-path="url(#pc)">
<polygon points="268,260.5 278,253 290.5,248 293,242 298,237.5 304,242 310,246 308,258 325,256 345,253 357,258 353,262 343,279.5 353,289.5 368,302 370.5,314.5 358,322 368,334.5 373,339.5 365.5,344.5 354,354.5 343,347 333,337 333,324.5 328,312 315.5,306 305.5,308 293,303 288,284.5 275.5,274.5 265.5,262" fill="#ffff00"/>
<polygon points="640.3,95.8 650.6,94.9 653.4,106.1 650.6,109.9 647.8,115.5 650.6,124.9 658.1,122.1 661.9,116.4 669.4,120.2 675.9,124.9 672.2,131.4 672.2,138 678.8,133.3 682.5,139.9 685.3,143.6 693.8,153 697.5,158.6 693.8,168 684.4,169.9 675,160.5 667.5,158.6 656.2,160.5 648.8,153 643.1,145.5 635.6,141.8 631.9,132.4 626.2,126.8 628.1,119.2 633.8,113.6 632.8,106.1 637.5,100.5" fill="#ffff00"/>
<polygon points="637.5,175.5 648.8,171.8 661.9,177.4 678.8,176.4 684.4,183 682.5,190.5 671.2,196.1 661.9,190.5 654.4,198 643.1,190.5 633.8,183" fill="#ffff00"/>
<polygon points="688.1,183 699.4,175.5 705,180.2 699.4,186.8 691.9,195.2 688.1,190.5" fill="#ffff00"/>
<polygon points="636.6,180 686.2,180 685.3,189.4 675,194.1 665.6,198.8 656.2,204.4 647.8,201.6 637.5,198.8 635.6,189.4" fill="#ffff00"/>
<polygon points="624.4,212.8 637.5,210 640.3,219.4 646.9,222.2 656.2,218.4 663.8,215.6 675,217.5 682.5,213.8 688.1,217.5 688.1,234.4 678.8,238.1 671.2,241.9 661.9,245.6 654.4,244.7 637.5,242.8 631.9,236.2 624.4,227.8" fill="#ffff00"/>
<polygon points="688.1,234.4 705,230.6 710.6,206.2 707.8,185.6 718.1,184.7 720.9,200.6 723.8,217.5 721.9,241.9 720,255 705,253.1 697.5,251.2 690,258.8 682.5,262.5 675,271.9 661.9,273.8 648.8,275.6 643.1,268.1 645,260.6 656.2,255 663.8,247.5 678.8,241.9" fill="#ffff00"/>
<polygon points="600,290.6 626.2,290.6 626.2,300 611.2,304.7 600,304.7" fill="#ffff00"/>
<polygon points="645,290.6 663.8,290.6 663.8,302.8 645,302.8" fill="#ffff00"/>
<polygon points="721.9,292.5 742.5,290.6 744.4,318 721.9,318" fill="#ffff00"/>
<polygon points="693.1,201.9 707.2,184.7 718.9,184.7 719.7,194.1 735.3,193.3 740,198.8 749.4,195.6 766.6,191.7 777.5,197.2 799.4,201.1 819.7,203.4 831.4,201.9 832.5,207.3 827.5,211.2 819.7,210.5 808.8,213.6 799.4,219.1 790,226.9 782.2,237.8 774.4,242.5 766.6,239.4 765,250.3 749.4,251.9 736.9,253.4 725.9,259.7 719.7,264.4 707.2,256.6 696.2,253.4 690,255 680.6,253.4 680.6,231.6 690,231.6 693.1,211.2" fill="#ffff00"/>
<polygon points="727.5,255 747.8,251.9 752.5,267.5 749.4,273.8 736.9,276.9 721.2,273.8 725.9,261.2" fill="#ffff00"/>
<polygon points="752.5,273.8 763.4,272.2 777.5,280 777.5,295 752.5,295 749.4,286.2" fill="#ffff00"/>
<polygon points="808.8,248.8 825.9,244.1 835.3,247.2 840,258.1 830.6,264.4 815,267.5 805.6,264.4 805.6,255" fill="#ffff00"/>
<polygon points="813.4,284.7 833.8,283.1 835.3,295 811.9,295" fill="#ffff00"/>
<polygon points="782.2,255 790,253.4 791.6,261.2 783.8,262.8" fill="#ffff00"/>
<polygon points="721.2,275.3 730.6,276.9 729.1,289.4 719.7,289.4" fill="#ffff00"/>
<polygon points="812.5,284.5 833.8,284.5 833.8,317 820,318.2 812.5,307" fill="#ffff00"/>
<polygon points="790,264.5 810,262 835,269.5 832.5,284.5 812.5,284.5 797.5,277" fill="#ffff00"/>
<polygon points="682.5,313.1 691.9,311.2 693.8,324.4 690,337.5 680.6,333.8" fill="#ffff00"/>
<polygon points="705,318.8 716.2,311.2 731.2,309.4 742.5,305.6 768.8,307.5 792,315 792,328.1 780,324.4 765,326.2 753.8,341.2 746.2,346.9 742.5,361.9 738.8,365.6 740.6,348.8 731.2,339.4 716.2,343.1 712.5,333.8 706.9,328.1" fill="#ffff00"/>
<polygon points="723.8,378.8 731.2,380.6 739.7,388.1 738.8,395.6 731.2,402.2 721.9,397.5 720,386.2" fill="#ffff00"/>
<polygon points="675,375 686.2,365.6 697.5,363.8 693.8,373.1 680.6,380.6" fill="#ffff00"/>
<polygon points="654.4,384.4 665.6,382.5 669.4,397.5 661.9,405 656.2,399.4" fill="#ffff00"/>
<polygon points="673.1,420 680.6,414.4 690,416.2 691.9,429.4 684.4,438 673.1,435" fill="#ffff00"/>
<polygon points="783.8,324.4 798.8,322.5 806.2,361.9 787.5,361.9" fill="#ffff00"/>
<polygon points="785,337 800,334.5 817.5,339.5 815,352 810,364.5 792.5,364.5 785,354.5" fill="#ffff00"/>
<polygon points="800,267 820,264.5 830,272 820,279.5 805,277" fill="#ffff00"/>
<polygon points="680,412 690,414.5 692.5,437 685,446 680,446" fill="#ffff00"/>
<polygon points="786.2,348.6 820.6,346.4 822.8,365.8 803.4,372.2 786.2,365.8" fill="#ffff00"/>
<polygon points="445,485 465,486.2 463.8,498.8 442.5,495.5" fill="#ffff00"/>
<polygon points="465,491.2 490,490 500,487.5 515,490 527.5,485 527.5,505 525,530 512.5,530 512.5,516.2 490,515 485,510 470,505 462.5,498.8" fill="#ffff00"/>
<polygon points="540,483.8 547.5,480 557.5,487.5 567.5,492.5 565,505 552.5,510 542.5,502.5 537.5,492.5" fill="#ffff00"/>
<polygon points="535,566.2 550,562.5 562.5,570 560,580 540,577.5 530,572.5" fill="#ffff00"/>
<polygon points="397.5,450 415,452.5 412.5,457.5 400,456.2" fill="#ffff00"/>
<polygon points="408,298.2 415.5,299.5 414.2,309.5 408,312 403,327 398,329.5 400.5,314.5 406.8,308.2" fill="#ffff00"/>
<polygon points="560,490 568.8,492.5 567.5,500 560,501.2" fill="#ffff00"/>
<polygon points="632.5,495.5 640,494.5 635,505 628.8,507.5" fill="#ffff00"/>
<polygon points="672.5,430 687.5,430 680,442.5 673.8,437.5" fill="#ffff00"/>
<polygon points="385.6,385.1 400.6,393.7 413.5,385.1 409.2,398 394.2,400.2" fill="#ffff00"/>
<polygon points="398.5,450.9 417.8,452.6 435,455.2 435,461.2 413.5,459.5 400.6,456" fill="#ffff00"/>
<polygon points="304,246 316,245 330,251 333,262 325,266 315,264 306,258" fill="#ff8000"/>
<polygon points="682.5,141.8 693.8,138.4 705,139.3 712.5,145.9 716.6,156.8 716.6,165.8 710.6,173.2 705,180.2 697.5,175.5 699.4,160.5 693.8,152.1 686.2,145.5" fill="#ff8000"/>
<polygon points="672.2,218.4 682.5,216.6 686.2,226.9 678.8,234.4 672.2,228.8" fill="#ff8000"/>
<polygon points="735,300 750,301.9 755.6,318 738.8,318" fill="#ff8000"/>
<polygon points="694.7,205 705.6,195.6 710.3,197.2 708.8,206.6 702.5,212.8 699.4,231.6 693.1,231.6" fill="#ff8000"/>
<polygon points="722,194.1 736.9,194.1 736.9,200.3 730.6,226.9 728.3,247.2 723.6,247.2 723.6,226.9" fill="#ff8000"/>
<polygon points="743.1,211.2 749.4,209.7 747.8,222.2 742.3,220.6" fill="#ff8000"/>
<polygon points="755.6,281.6 771.2,281.6 771.2,289.4 757.2,289.4" fill="#ff8000"/>
<polygon points="492.5,492.5 505,488.8 512.5,500 505,506.2 495,502.5" fill="#ff8000"/>
<path d="M640 199h2v2h-2zM675 207h3v4h-3zM681 232h2v3h-2zM719 252h4v2h-4zM697 293h3v4h-3zM666 276h3v5h-3zM684 255h5v3h-5zM713 221h4v3h-4zM616 233h2v3h-2zM611 252h4v5h-4zM661 260h2v4h-2zM648 212h5v5h-5zM619 297h5v3h-5zM657 261h3v3h-3zM642 304h2v4h-2zM633 279h5v4h-5zM645 271h3v4h-3zM652 190h4v4h-4zM695 209h6v3h-6zM684 214h2v5h-2zM698 251h5v3h-5zM702 212h3v3h-3zM638 280h5v5h-5zM633 204h6v3h-6zM619 272h3v5h-3zM677 258h2v2h-2zM653 315h6v2h-6zM665 220h4v3h-4zM642 205h2v3h-2zM683 211h6v2h-6zM607 270h2v3h-2zM630 202h4v2h-4zM632 216h2v4h-2zM710 221h3v5h-3zM614 221h2v2h-2zM640 205h5v2h-5zM604 296h5v5h-5zM627 249h6v5h-6zM681 272h6v5h-6zM633 306h5v3h-5zM679 268h5v3h-5zM719 261h2v2h-2zM682 316h5v2h-5zM602 278h3v3h-3zM656 208h4v5h-4zM686 292h3v3h-3zM677 282h4v2h-4zM646 291h6v3h-6zM640 208h2v4h-2zM605 231h6v3h-6zM614 292h2v4h-2zM603 291h4v3h-4zM674 279h5v2h-5zM614 255h5v5h-5zM646 251h3v5h-3zM716 235h5v5h-5zM662 268h2v2h-2zM678 227h3v3h-3zM653 297h4v4h-4zM618 263h5v3h-5zM629 269h5v2h-5zM604 252h4v5h-4zM685 199h2v5h-2zM636 290h2v5h-2zM644 302h2v2h-2zM603 261h2v2h-2zM666 275h2v3h-2zM635 326h5v4h-5zM670 234h2v2h-2zM665 282h4v2h-4zM608 287h6v4h-6zM681 231h6v5h-6zM603 254h4v4h-4zM666 279h6v2h-6zM611 262h4v3h-4zM644 234h6v4h-6zM686 242h5v4h-5zM671 274h3v5h-3zM713 226h6v3h-6zM616 267h3v2h-3zM621 226h6v3h-6zM648 214h2v4h-2zM679 205h5v5h-5zM715 245h5v3h-5zM645 287h4v5h-4zM679 246h5v3h-5zM647 210h6v4h-6zM719 255h2v3h-2zM682 201h6v3h-6zM700 313h4v5h-4zM657 234h4v3h-4zM701 284h3v2h-3zM619 270h3v5h-3zM640 204h3v3h-3zM686 221h4v4h-4zM636 227h5v2h-5zM714 221h5v2h-5zM653 278h2v2h-2zM715 222h4v3h-4zM685 271h6v2h-6zM630 230h2v4h-2zM669 194h2v2h-2zM675 272h5v3h-5zM698 212h6v5h-6zM632 246h3v2h-3zM685 270h4v5h-4zM711 304h6v4h-6zM606 260h6v2h-6zM605 226h4v4h-4zM712 299h5v5h-5zM655 296h4v2h-4zM683 215h2v3h-2zM689 285h3v3h-3zM616 259h4v3h-4zM653 301h3v2h-3zM621 201h5v2h-5zM602 257h5v2h-5zM650 309h2v5h-2zM629 233h5v5h-5zM647 280h6v2h-6zM639 275h5v3h-5zM702 310h5v5h-5zM670 271h2v5h-2zM675 247h2v5h-2zM665 243h5v2h-5zM649 204h5v2h-5zM614 274h4v2h-4zM673 249h6v4h-6zM680 190h5v3h-5zM642 256h2v4h-2zM675 274h2v4h-2zM637 223h6v5h-6zM710 269h2v5h-2zM655 267h6v3h-6zM675 257h6v2h-6zM685 323h2v3h-2zM638 313h2v3h-2zM604 281h4v3h-4zM688 307h6v4h-6zM674 210h2v3h-2zM653 314h4v3h-4zM696 214h6v4h-6zM632 259h2v3h-2zM700 285h2v4h-2zM640 212h3v4h-3zM665 196h2v5h-2zM661 210h2v3h-2zM706 212h4v3h-4zM710 226h3v5h-3zM676 307h4v3h-4zM711 234h5v3h-5zM702 269h4v4h-4zM673 216h6v4h-6zM707 224h2v2h-2zM624 233h2v4h-2zM639 294h5v3h-5zM653 203h5v3h-5zM690 203h5v2h-5zM615 254h2v5h-2zM675 206h5v4h-5zM724 306h5v4h-5zM780 301h3v5h-3zM711 290h4v2h-4zM725 281h4v3h-4zM787 311h5v4h-5zM741 338h2v5h-2zM711 292h5v4h-5zM752 288h3v3h-3zM754 268h2v5h-2zM789 329h4v5h-4zM766 303h2v5h-2zM768 279h6v3h-6zM732 292h5v4h-5zM793 295h6v3h-6zM721 274h6v2h-6zM744 344h2v4h-2zM786 328h4v3h-4zM746 252h5v3h-5zM771 315h2v2h-2zM766 344h4v5h-4zM724 285h5v5h-5zM740 260h2v4h-2zM754 305h5v5h-5zM768 304h3v3h-3zM794 306h6v5h-6zM736 287h5v5h-5zM709 297h6v3h-6zM768 327h2v4h-2zM733 257h3v3h-3zM752 278h6v5h-6zM756 254h2v3h-2zM768 315h5v3h-5zM792 328h4v4h-4zM711 303h5v3h-5zM736 332h5v4h-5zM740 344h4v3h-4zM749 265h5v4h-5zM777 263h5v2h-5zM769 301h2v4h-2zM741 309h4v2h-4zM706 316h5v4h-5zM734 272h3v4h-3zM725 310h6v5h-6zM759 327h5v2h-5zM757 287h4v5h-4zM725 324h6v3h-6zM751 253h3v4h-3zM750 250h4v4h-4zM768 323h5v3h-5zM732 297h3v3h-3zM799 288h2v2h-2zM733 337h3v3h-3zM721 320h2v4h-2zM776 264h2v4h-2zM729 299h4v5h-4zM794 277h6v4h-6zM729 340h2v3h-2zM736 280h3v5h-3zM730 283h4v4h-4zM731 270h2v4h-2zM738 298h5v4h-5zM752 285h6v2h-6zM738 337h4v3h-4zM750 281h3v3h-3zM789 308h2v3h-2zM708 317h3v3h-3zM756 329h4v5h-4zM740 255h3v5h-3zM754 295h2v4h-2zM709 276h2v5h-2zM719 300h3v2h-3zM754 264h5v3h-5zM734 305h4v5h-4zM713 295h5v3h-5zM796 283h5v5h-5zM724 302h2v5h-2zM779 321h6v2h-6zM737 264h3v4h-3zM739 257h2v2h-2zM733 309h5v5h-5zM731 283h6v2h-6zM723 267h3v4h-3zM769 290h2v2h-2zM755 330h2v3h-2zM747 307h4v4h-4zM792 289h6v4h-6zM755 276h5v3h-5zM775 270h3v2h-3zM790 313h6v4h-6zM717 289h2v5h-2zM745 255h2v5h-2zM775 254h3v5h-3zM778 267h6v5h-6zM781 262h5v4h-5zM730 273h5v4h-5zM759 335h6v3h-6zM707 281h4v3h-4zM717 290h2v2h-2zM792 296h3v5h-3zM734 319h3v3h-3zM758 307h5v3h-5zM709 303h3v4h-3zM725 260h4v3h-4zM792 312h4v2h-4zM752 322h6v2h-6zM717 290h5v2h-5zM746 303h4v5h-4zM719 275h4v2h-4zM747 281h2v5h-2zM752 267h2v4h-2zM709 304h3v2h-3zM794 277h5v4h-5zM727 314h5v4h-5zM783 333h5v5h-5zM742 272h4v2h-4zM738 328h5v3h-5zM797 290h3v2h-3zM774 292h6v5h-6zM780 339h6v3h-6zM714 306h5v5h-5zM729 338h2v3h-2zM747 271h4v2h-4zM747 327h3v4h-3zM797 319h2v4h-2zM729 339h3v4h-3zM785 293h4v3h-4zM721 279h6v3h-6zM791 299h4v4h-4zM747 319h4v4h-4zM772 270h6v3h-6zM761 292h3v4h-3zM721 328h4v5h-4zM720 285h2v5h-2zM784 311h3v4h-3zM770 286h4v3h-4zM754 307h3v3h-3zM766 344h6v4h-6zM746 257h4v2h-4zM725 328h6v5h-6zM736 274h4v4h-4zM780 314h2v2h-2zM759 252h6v4h-6zM765 332h3v3h-3zM751 302h4v5h-4zM729 331h2v5h-2zM767 284h6v4h-6zM772 321h6v4h-6zM732 276h2v3h-2zM763 283h3v5h-3zM737 276h3v4h-3zM722 333h2v3h-2zM708 285h6v5h-6zM745 305h3v2h-3zM740 258h4v3h-4zM722 279h2v3h-2zM780 289h3v4h-3zM735 263h3v5h-3zM743 262h5v3h-5zM757 302h5v4h-5zM781 258h4v5h-4zM844 298h6v2h-6zM830 303h3v4h-3zM813 290h6v2h-6zM797 310h5v4h-5zM812 272h4v2h-4zM816 285h3v5h-3zM822 317h4v4h-4zM812 297h4v2h-4zM815 309h5v4h-5zM843 300h4v5h-4zM809 322h4v2h-4zM839 307h5v2h-5zM810 324h3v5h-3zM854 299h3v3h-3zM837 306h2v3h-2zM807 315h3v5h-3zM827 314h3v5h-3zM806 283h6v5h-6zM821 271h6v5h-6zM799 303h6v4h-6zM853 311h5v3h-5zM791 295h5v4h-5zM830 264h5v2h-5zM854 294h2v5h-2zM813 280h5v2h-5zM821 299h6v5h-6zM831 298h6v4h-6zM824 320h3v5h-3zM814 271h5v3h-5zM809 266h6v5h-6zM811 308h6v5h-6zM832 282h6v3h-6zM823 294h4v5h-4zM793 294h6v4h-6zM803 320h2v5h-2zM851 278h4v2h-4zM813 302h4v5h-4zM832 270h4v4h-4zM854 284h4v3h-4zM831 318h2v5h-2zM828 312h3v2h-3zM819 280h4v4h-4zM827 267h6v4h-6zM839 306h2v5h-2zM851 279h2v4h-2zM819 326h4v2h-4zM816 302h3v5h-3zM795 309h4v2h-4zM822 316h3v4h-3zM855 285h5v4h-5zM819 300h3v2h-3zM828 301h3v5h-3zM814 290h6v4h-6zM820 262h2v3h-2zM799 292h6v3h-6zM840 329h2v4h-2zM812 266h4v3h-4zM807 269h5v3h-5zM855 305h3v2h-3zM806 269h6v2h-6zM813 283h5v3h-5zM846 294h3v4h-3zM817 292h6v2h-6zM838 269h6v5h-6zM797 313h4v3h-4zM796 308h5v5h-5zM858 288h3v5h-3zM825 325h4v2h-4zM829 284h3v3h-3zM807 309h5v5h-5zM833 411h3v2h-3zM823 419h4v2h-4zM821 403h5v2h-5zM831 408h5v2h-5zM813 406h3v2h-3zM848 398h4v2h-4zM829 410h4v2h-4zM824 397h2v2h-2zM844 384h2v2h-2zM849 400h5v4h-5zM833 426h2v4h-2zM847 413h3v4h-3zM844 410h4v4h-4zM825 423h5v2h-5zM826 421h2v2h-2zM849 386h5v2h-5zM837 420h5v2h-5zM850 388h2v3h-2zM816 419h3v3h-3zM853 388h4v4h-4zM832 416h3v4h-3zM849 423h2v2h-2zM820 393h3v3h-3zM860 400h2v3h-2zM833 389h5v2h-5zM846 405h3v3h-3zM834 423h3v3h-3zM814 398h5v4h-5zM823 423h5v2h-5zM838 404h2v4h-2zM845 384h2v4h-2zM837 410h5v3h-5zM823 398h4v4h-4zM834 426h5v3h-5zM858 403h4v2h-4zM838 404h4v4h-4zM850 388h2v2h-2zM847 411h2v2h-2zM836 383h4v3h-4zM830 392h2v3h-2zM845 420h3v3h-3zM825 397h3v2h-3zM836 396h5v4h-5zM855 403h3v3h-3zM836 407h2v2h-2zM799 362h3v5h-3zM807 363h3v4h-3zM789 366h3v5h-3zM800 350h5v4h-5zM823 352h6v2h-6zM813 351h5v5h-5zM790 367h3v3h-3zM791 353h3v3h-3zM806 371h3v3h-3zM793 356h5v4h-5zM814 354h2v3h-2zM787 363h6v2h-6zM790 355h6v5h-6zM807 354h5v5h-5zM808 372h3v2h-3zM795 360h5v3h-5zM803 358h2v5h-2zM817 356h4v4h-4zM818 352h5v2h-5zM804 355h2v5h-2zM793 368h4v2h-4zM806 347h3v5h-3zM804 354h6v4h-6zM807 355h3v5h-3zM787 360h4v4h-4zM792 366h4v5h-4zM806 366h2v3h-2zM791 351h4v3h-4zM802 355h6v5h-6zM809 359h2v3h-2zM799 346h3v2h-3zM822 353h5v5h-5zM797 370h4v3h-4zM797 369h3v5h-3zM797 358h6v2h-6zM824 358h2v5h-2zM806 364h4v2h-4zM800 367h5v2h-5zM822 358h4v3h-4zM819 364h3v5h-3zM690 112h5v3h-5zM660 109h4v4h-4zM694 158h4v2h-4zM697 148h2v3h-2zM690 113h3v4h-3zM635 141h5v2h-5zM660 111h4v3h-4zM646 174h2v3h-2zM654 136h4v4h-4zM641 170h3v2h-3zM649 126h5v2h-5zM639 122h5v2h-5zM683 139h2v2h-2zM657 174h3v4h-3zM691 118h2v3h-2zM654 178h4v2h-4zM679 103h3v4h-3zM663 138h5v3h-5zM632 126h2v2h-2zM655 127h3v3h-3zM670 144h2v3h-2zM690 110h5v2h-5zM670 109h3v4h-3zM635 149h2v2h-2zM631 114h4v2h-4zM690 109h4v2h-4zM667 149h2v2h-2zM670 149h2v2h-2zM633 114h2v2h-2zM681 123h5v4h-5zM655 138h2v4h-2zM659 105h5v3h-5zM668 179h5v2h-5zM669 101h3v2h-3zM690 121h5v3h-5zM634 110h2v4h-2zM690 131h5v2h-5zM652 120h4v4h-4zM695 120h2v4h-2zM672 102h4v3h-4zM671 121h4v2h-4zM653 118h2v4h-2zM660 163h2v2h-2zM664 169h4v4h-4zM673 139h5v4h-5zM678 134h2v4h-2zM651 103h2v3h-2zM654 126h3v2h-3zM672 141h5v3h-5zM695 161h2v3h-2zM627 156h2v4h-2zM672 103h5v3h-5zM664 101h3v2h-3zM651 154h2v4h-2zM683 115h2v3h-2zM660 165h4v4h-4zM636 169h4v2h-4zM688 162h5v2h-5zM671 126h4v2h-4zM692 157h3v2h-3zM683 106h5v3h-5zM662 107h3v4h-3zM680 111h4v3h-4zM675 157h5v4h-5zM646 134h3v2h-3zM637 139h5v2h-5zM682 138h2v3h-2zM691 151h2v2h-2zM632 112h4v2h-4zM657 164h3v4h-3zM560 292h2v1h-2zM562 299h1v2h-1zM557 302h3v1h-3zM562 301h2v1h-2zM561 295h1v2h-1zM556 293h1v2h-1zM552 314h1v2h-1zM545 301h3v1h-3zM564 307h2v2h-2zM556 305h2v1h-2z" fill="#ffff00"/>
<path d="M791 241h2v3h-2zM703 229h4v3h-4zM782 206h2v3h-2zM739 225h2v3h-2zM803 215h4v2h-4zM797 228h3v2h-3zM792 233h3v3h-3zM833 212h4v4h-4zM806 215h4v2h-4zM787 231h2v3h-2zM749 221h2v2h-2zM778 206h4v4h-4zM769 224h3v3h-3zM812 238h4v4h-4zM725 221h3v3h-3zM709 221h3v3h-3zM765 225h2v2h-2zM762 235h3v3h-3zM834 215h2v4h-2zM728 244h5v4h-5zM737 224h5v2h-5zM728 224h2v3h-2zM758 198h3v4h-3zM706 231h3v3h-3zM768 201h5v3h-5zM796 213h4v2h-4zM718 225h4v2h-4zM797 197h4v2h-4zM825 212h5v2h-5zM743 224h4v4h-4zM766 230h4v3h-4zM730 227h4v4h-4zM783 249h5v2h-5zM740 221h4v2h-4zM783 244h4v2h-4zM823 208h3v2h-3zM763 234h4v2h-4zM809 232h5v4h-5zM803 225h2v3h-2zM764 246h2v4h-2zM710 217h2v3h-2zM742 250h4v2h-4zM728 202h3v3h-3zM783 229h5v2h-5zM757 203h5v3h-5zM727 210h5v4h-5zM779 237h4v2h-4zM812 206h3v4h-3zM804 198h3v3h-3zM826 237h3v3h-3zM725 212h2v2h-2zM729 203h2v4h-2zM773 215h5v3h-5zM827 217h2v3h-2zM793 225h5v4h-5zM778 214h4v2h-4zM804 231h5v4h-5zM707 232h2v2h-2zM799 204h2v3h-2zM788 229h5v4h-5zM724 218h5v2h-5zM729 247h2v2h-2zM716 239h5v2h-5zM706 220h5v4h-5zM765 200h5v4h-5zM740 233h5v3h-5zM821 240h3v3h-3zM767 198h2v2h-2zM746 240h5v4h-5zM808 220h5v3h-5zM807 231h3v2h-3zM782 224h3v2h-3zM705 227h2v2h-2zM750 237h5v4h-5zM703 215h2v4h-2zM756 205h3v4h-3zM796 238h5v4h-5zM803 225h4v3h-4zM773 243h3v3h-3zM801 239h5v2h-5zM816 205h4v4h-4zM769 235h5v3h-5zM741 243h5v2h-5zM757 207h5v3h-5zM795 215h5v2h-5zM729 214h4v2h-4zM728 199h3v3h-3zM721 242h3v2h-3zM790 245h4v2h-4zM790 205h5v4h-5zM731 228h2v4h-2zM770 231h2v4h-2zM760 225h3v4h-3zM771 218h2v4h-2zM800 203h5v2h-5zM738 221h2v4h-2zM737 229h5v3h-5zM764 224h3v2h-3zM764 239h2v3h-2zM798 235h4v4h-4zM803 204h4v2h-4zM794 207h4v2h-4zM768 202h5v4h-5zM715 238h2v2h-2zM767 199h3v4h-3zM790 204h3v3h-3zM717 235h4v4h-4zM750 246h4v2h-4zM749 211h4v4h-4zM827 228h4v2h-4zM730 240h2v2h-2zM785 225h2v3h-2zM701 223h2v4h-2zM721 245h4v3h-4zM728 208h4v4h-4zM819 235h4v3h-4zM775 195h2v4h-2zM770 222h4v4h-4zM823 229h2v2h-2zM811 244h4v3h-4zM796 242h2v2h-2zM809 209h2v4h-2zM793 221h4v4h-4zM723 224h5v4h-5zM767 223h3v3h-3zM767 204h4v4h-4zM737 199h3v4h-3zM770 245h4v3h-4zM728 221h2v3h-2zM734 240h2v3h-2zM808 239h3v3h-3zM770 219h5v4h-5zM828 225h2v2h-2zM712 235h5v2h-5zM711 239h3v4h-3zM796 241h2v4h-2zM812 238h3v4h-3zM816 208h4v4h-4zM759 205h2v2h-2zM775 201h3v3h-3zM801 239h4v4h-4zM778 198h5v4h-5zM832 209h4v4h-4zM757 212h2v2h-2zM793 246h2v3h-2zM781 238h4v4h-4zM804 201h4v4h-4zM782 217h5v2h-5zM773 227h5v3h-5zM738 244h2v4h-2zM621 230h4v3h-4zM637 197h3v2h-3zM655 192h4v3h-4zM661 274h2v4h-2zM640 200h2v4h-2zM619 278h2v4h-2zM682 283h4v2h-4zM684 199h2v2h-2zM696 214h2v4h-2zM618 261h3v4h-3zM637 243h5v3h-5zM697 233h3v2h-3zM640 258h3v4h-3zM664 272h4v3h-4zM630 279h5v2h-5zM645 263h3v2h-3zM658 267h2v3h-2zM651 191h2v2h-2zM671 203h4v3h-4zM638 229h5v3h-5zM652 217h4v3h-4zM658 245h4v2h-4zM679 222h5v4h-5zM689 278h4v4h-4zM623 279h5v3h-5zM642 241h5v3h-5zM692 274h3v3h-3zM638 291h5v3h-5zM622 262h5v2h-5zM632 265h4v3h-4zM678 287h4v3h-4zM632 235h2v4h-2zM667 271h2v2h-2zM677 279h3v2h-3zM632 198h2v2h-2zM627 209h2v3h-2zM670 200h4v2h-4zM636 288h2v2h-2zM619 270h3v3h-3zM635 213h2v2h-2zM621 275h5v4h-5zM633 274h2v2h-2zM633 242h4v4h-4zM651 208h4v4h-4zM622 236h5v3h-5zM655 213h5v2h-5zM630 224h3v4h-3zM651 283h3v2h-3zM656 272h5v3h-5zM665 262h4v2h-4zM686 223h3v4h-3zM661 273h3v2h-3zM662 256h3v2h-3zM634 276h4v3h-4zM646 296h4v2h-4zM611 259h2v3h-2zM648 263h2v4h-2zM663 290h4v4h-4zM629 206h3v3h-3zM623 229h3v3h-3zM648 262h2v2h-2zM648 193h3v2h-3zM620 223h4v4h-4zM632 247h3v4h-3zM662 269h2v4h-2zM626 198h2v3h-2zM620 249h4v3h-4zM674 256h4v4h-4zM649 248h5v2h-5zM661 200h5v2h-5zM699 234h4v3h-4zM676 232h3v2h-3zM666 192h3v2h-3zM638 292h2v2h-2zM619 229h2v4h-2zM650 284h2v2h-2zM680 261h4v2h-4zM646 248h5v2h-5zM699 228h3v3h-3zM627 227h5v3h-5zM695 259h3v2h-3zM661 276h5v3h-5zM659 243h5v3h-5zM632 252h4v2h-4zM667 227h5v4h-5zM659 298h4v3h-4zM657 252h3v3h-3zM640 273h5v4h-5zM641 194h3v2h-3zM663 263h2v2h-2zM674 284h4v2h-4zM684 218h3v2h-3zM667 292h2v4h-2zM674 254h5v3h-5zM640 267h5v4h-5zM654 211h4v4h-4zM686 279h4v3h-4zM643 297h2v3h-2zM654 240h5v4h-5zM655 202h4v4h-4zM665 258h2v3h-2zM627 242h3v2h-3zM681 276h4v3h-4zM664 226h3v2h-3zM638 283h2v2h-2zM671 288h3v2h-3zM678 236h3v2h-3zM650 236h3v2h-3zM636 197h5v2h-5zM629 218h3v3h-3zM674 143h3v4h-3zM673 109h2v2h-2zM677 172h5v3h-5zM654 117h4v2h-4zM668 152h2v4h-2zM680 136h3v4h-3zM634 124h3v2h-3zM670 118h5v2h-5zM662 122h4v4h-4zM677 155h5v3h-5zM662 130h4v3h-4zM685 166h4v4h-4zM677 111h3v4h-3zM649 107h5v2h-5zM680 121h3v3h-3zM694 130h4v4h-4zM656 137h4v2h-4zM634 145h2v3h-2zM692 131h3v2h-3zM696 115h4v4h-4zM663 134h5v4h-5zM676 136h3v4h-3zM685 106h5v2h-5zM641 104h4v3h-4zM683 126h3v4h-3zM634 138h2v4h-2zM690 141h4v3h-4zM651 150h2v3h-2zM641 146h5v3h-5zM683 127h5v2h-5zM654 113h2v4h-2zM649 146h2v3h-2zM699 142h5v3h-5zM632 115h4v4h-4zM640 113h3v3h-3zM694 121h4v4h-4zM640 117h2v3h-2zM676 134h4v3h-4zM655 163h3v3h-3zM676 95h3v3h-3zM671 153h4v2h-4zM646 150h4v2h-4zM651 126h4v3h-4zM651 141h4v4h-4zM639 113h3v4h-3zM661 118h2v4h-2zM652 106h5v2h-5zM655 153h2v3h-2zM679 170h5v4h-5zM650 168h3v4h-3zM682 119h2v4h-2zM651 173h4v2h-4zM650 102h4v3h-4zM671 113h5v3h-5zM685 111h5v4h-5zM661 120h3v3h-3zM645 103h4v3h-4zM680 162h4v3h-4zM679 161h5v2h-5zM630 137h4v2h-4zM748 278h4v2h-4zM769 314h5v2h-5zM720 304h5v4h-5zM720 290h4v3h-4zM759 315h5v3h-5zM761 270h5v2h-5zM779 286h4v3h-4zM790 304h4v4h-4zM759 345h5v4h-5zM709 293h2v2h-2zM786 333h3v4h-3zM752 299h4v3h-4zM781 291h5v4h-5zM728 318h3v2h-3zM778 286h4v3h-4zM762 269h5v4h-5zM766 345h4v2h-4zM755 311h5v3h-5zM799 287h3v3h-3zM782 277h4v2h-4zM744 331h2v2h-2zM758 311h4v2h-4zM788 286h5v2h-5zM778 262h5v4h-5zM766 268h2v3h-2zM772 277h2v4h-2zM710 318h4v4h-4zM723 311h3v2h-3zM761 257h5v4h-5zM778 314h5v2h-5zM755 290h5v3h-5zM762 251h3v3h-3zM785 296h3v3h-3zM724 260h2v3h-2zM730 300h3v3h-3zM732 285h4v3h-4zM780 301h4v2h-4zM745 297h2v2h-2zM785 280h4v2h-4zM731 265h2v2h-2zM743 318h2v3h-2zM748 280h5v3h-5zM793 325h5v4h-5zM770 342h4v3h-4zM746 288h3v2h-3zM739 325h3v4h-3zM750 277h3v2h-3zM764 311h3v4h-3zM765 330h5v2h-5zM758 338h4v3h-4zM793 319h5v4h-5zM742 269h4v4h-4zM751 255h5v4h-5zM752 335h5v3h-5zM732 320h3v3h-3zM712 307h5v3h-5zM744 343h4v2h-4zM756 306h5v4h-5zM715 312h5v4h-5zM710 314h2v2h-2zM782 293h3v2h-3zM786 303h2v4h-2zM725 318h2v2h-2zM737 266h5v2h-5zM777 260h3v4h-3zM735 282h2v4h-2zM777 285h2v2h-2zM719 288h3v3h-3zM782 261h4v4h-4zM713 312h5v2h-5zM762 303h2v3h-2zM786 291h5v2h-5zM741 274h2v3h-2zM724 263h3v3h-3zM725 312h3v4h-3zM713 299h4v3h-4zM733 340h5v4h-5zM731 255h4v2h-4zM770 263h2v3h-2zM740 323h2v3h-2z" fill="#ff8000"/>
<polygon points="666.6,163.3 672.2,160.5 675,166.1 682.5,169.9 681.6,175.5 667.5,176.4" fill="#ff0000"/>
<polygon points="804.1,259.7 811.9,259.4 811.9,262.8 804.1,263.1" fill="#ff0000"/>
<polygon points="813.4,280 830.6,280.3 830.6,283.9 813.4,283.6" fill="#ff0000"/>
<polygon points="838.4,264.4 847.8,264.4 847.8,266.7 838.4,266.7" fill="#ff0000"/>
<polygon points="690,267.5 694.7,267.5 694.7,275.3 690,275.3" fill="#ff0000"/>
<polygon points="770.5,245.6 775.2,244.1 775.9,251.9 771.2,252.7" fill="#ff0000"/>
<polygon points="667.9,375.9 673.5,375 674.1,397.5 668.4,397.5" fill="#ff0000"/>
<polygon points="694.7,311.2 698.4,311.2 699.4,365.6 695.6,365.6" fill="#ff0000"/>
<polygon points="556.2,542.5 578.8,538.8 601.2,536.9 605,527.5 627.5,531.2 629.4,557.5 621.9,565 631.2,585.6 627.5,595 612.5,598.8 597.5,604.4 584.4,602.5 575,600.6 561.9,589.4 546.9,583.8 537.5,576.2 533.8,565 543.1,551.9" fill="#ff0000"/>
<polygon points="642.5,488.8 672.5,481.2 673.8,493.8 655,502.5 645,506.2" fill="#ff0000"/>
<polygon points="705,480 715,460 732.5,457.5 732.5,483.8 720,490 707.5,492.5" fill="#ff0000"/>
<polygon points="574.1,557.5 582.5,553.8 591.9,557.5 590.9,566.9 588.1,580 575,580 571.2,570.6" fill="#ff8000"/>
<polygon points="612.5,544.4 620,542.5 620,555.6 614.4,557.5" fill="#ff8000"/>
<polygon points="546.9,565 556.2,562.2 561.9,566.9 561.9,576.2 552.5,578.1 546.9,572.5" fill="#ffff00"/>
<polygon points="580.6,586.6 590,585.6 590.9,592.2 581.6,593.5" fill="#ffff00"/>
<polygon points="602.2,590.3 607.8,591.2 606.9,597.8 601.2,597.2" fill="#ffff00"/>
<polygon points="511.2,521.9 524.4,523.8 522.5,531.2 513.1,529.4" fill="#ffff00"/>
<path d="M546 398h2v2h-2zM551 398h2v4h-2zM545 398h5v2h-5zM545 400h2v4h-2zM544 398h2v4h-2zM549 397h3v2h-3zM549 398h5v2h-5zM548 400h3v2h-3zM549 401h4v2h-4zM548 397h2v4h-2zM575 437h5v4h-5zM579 439h4v4h-4zM576 432h3v2h-3zM581 435h4v5h-4zM577 440h2v5h-2zM575 433h5v5h-5zM573 437h6v4h-6zM577 434h5v5h-5zM576 437h2v2h-2zM584 433h6v5h-6zM577 434h4v2h-4zM587 434h6v2h-6zM580 432h4v3h-4zM584 434h5v2h-5zM575 434h4v3h-4zM585 439h4v5h-4zM588 437h5v3h-5zM574 432h3v3h-3zM575 433h3v5h-3zM581 436h4v3h-4zM583 435h6v2h-6zM579 439h6v5h-6zM611 415h5v4h-5zM611 412h3v3h-3zM608 414h2v2h-2zM607 415h2v2h-2zM619 419h3v4h-3zM609 415h4v3h-4zM607 423h5v3h-5zM613 410h2v4h-2zM610 413h3v4h-3zM613 411h2v4h-2zM610 419h2v4h-2zM619 417h3v3h-3zM617 418h4v4h-4zM609 422h3v2h-3zM618 421h3v2h-3zM613 415h2v2h-2zM618 417h3v4h-3zM615 415h4v3h-4zM613 414h5v4h-5zM621 419h2v3h-2zM620 415h2v4h-2zM607 415h3v3h-3zM595 457h4v2h-4zM584 457h2v3h-2zM578 455h3v5h-3zM593 455h6v5h-6zM590 457h6v3h-6zM591 455h3v5h-3zM579 458h6v4h-6zM580 457h3v2h-3zM596 457h5v5h-5zM594 461h3v3h-3zM587 454h5v3h-5zM589 460h3v3h-3zM577 459h2v2h-2zM582 458h6v5h-6zM593 455h6v2h-6zM580 456h2v5h-2zM587 460h2v5h-2zM582 462h6v3h-6zM591 458h6v5h-6zM586 456h6v4h-6zM579 458h5v2h-5zM583 457h3v5h-3zM576 459h2v3h-2zM597 459h4v3h-4zM561 445h5v2h-5zM565 444h5v2h-5zM560 451h5v3h-5zM562 449h2v4h-2zM562 449h5v3h-5zM565 450h4v4h-4zM567 447h2v2h-2zM561 443h3v3h-3zM566 458h4v3h-4zM564 456h2v3h-2zM559 456h5v2h-5zM561 442h2v3h-2zM563 449h5v3h-5zM564 443h3v2h-3zM568 447h3v2h-3zM567 455h3v3h-3zM609 472h4v3h-4zM609 475h5v2h-5zM612 470h5v4h-5zM612 470h4v4h-4zM607 469h3v4h-3zM611 468h4v2h-4zM610 474h5v2h-5zM605 472h5v4h-5zM586 495h3v4h-3zM582 496h6v4h-6zM581 505h4v3h-4zM582 491h5v2h-5zM584 498h3v3h-3zM584 491h4v2h-4zM580 499h5v2h-5zM582 500h2v3h-2zM586 501h6v5h-6zM587 501h5v3h-5zM581 500h3v2h-3zM588 501h6v5h-6zM587 502h3v2h-3zM588 499h3v2h-3zM582 492h5v2h-5zM586 500h3v5h-3zM581 497h2v2h-2zM586 492h5v4h-5zM669 448h3v4h-3zM669 433h5v3h-5zM671 434h2v4h-2zM667 432h3v3h-3zM662 446h4v4h-4zM666 427h2v3h-2zM662 444h3v4h-3zM665 445h4v3h-4zM665 446h3v3h-3zM658 438h5v3h-5zM663 450h3v2h-3zM666 431h4v3h-4zM660 448h4v2h-4zM668 433h5v3h-5zM665 438h4v4h-4zM660 436h4v2h-4zM669 448h2v2h-2zM668 450h4v3h-4zM663 437h2v3h-2zM671 446h2v3h-2zM659 448h4v4h-4zM671 433h4v3h-4zM665 432h4v3h-4zM670 447h5v4h-5zM666 445h2v4h-2zM664 442h3v4h-3zM627 446h3v1h-3zM557 439h2v2h-2zM566 473h3v2h-3zM581 420h2v2h-2zM552 463h1v1h-1zM590 480h3v1h-3zM585 430h2v2h-2zM554 415h1v1h-1zM574 405h1v2h-1zM566 455h1v2h-1zM578 473h1v2h-1zM567 474h2v2h-2zM597 433h3v1h-3zM578 463h2v2h-2zM625 487h1v1h-1zM543 469h2v2h-2zM540 436h3v2h-3zM637 421h1v1h-1zM555 450h3v1h-3zM634 471h3v2h-3zM549 477h1v1h-1zM563 492h3v2h-3zM636 461h3v2h-3zM610 407h1v2h-1zM592 456h2v2h-2zM562 458h1v2h-1zM572 483h1v2h-1zM593 452h1v2h-1zM610 427h1v1h-1zM590 466h2v1h-2zM566 465h2v1h-2zM589 468h3v2h-3zM576 437h1v2h-1zM614 448h1v2h-1zM637 428h1v1h-1zM587 423h2v1h-2zM635 447h1v1h-1zM589 491h1v1h-1zM542 458h2v1h-2zM611 414h2v2h-2zM633 430h1v2h-1zM543 465h2v2h-2zM638 441h1v1h-1zM582 488h3v1h-3zM578 476h2v2h-2zM549 469h1v2h-1zM594 442h2v2h-2zM614 445h3v2h-3zM565 461h2v1h-2zM578 444h1v2h-1zM559 402h3v2h-3zM576 430h3v1h-3zM566 470h2v2h-2zM570 471h3v1h-3zM588 495h2v2h-2zM631 481h1v2h-1zM558 479h3v2h-3zM622 476h3v1h-3zM573 429h2v1h-2zM591 436h1v1h-1zM581 463h2v2h-2zM556 440h1v1h-1zM566 404h1v2h-1zM590 470h2v1h-2zM563 439h3v1h-3zM615 484h3v1h-3zM618 426h2v2h-2zM577 472h1v2h-1zM565 421h1v2h-1zM628 456h2v1h-2zM566 462h3v4h-3zM587 451h2v2h-2zM558 444h4v2h-4zM590 437h2v2h-2zM576 456h3v2h-3zM565 458h5v4h-5zM560 455h2v2h-2zM578 453h4v2h-4zM549 441h2v2h-2zM583 459h2v3h-2zM567 442h4v2h-4zM557 455h5v2h-5zM567 455h3v4h-3zM573 451h5v4h-5zM580 443h2v3h-2zM584 458h5v3h-5zM586 451h5v4h-5zM567 460h5v2h-5zM568 456h5v4h-5zM590 445h3v2h-3zM548 448h5v2h-5zM575 460h3v2h-3zM564 435h3v2h-3zM552 446h3v3h-3zM595 445h2v4h-2zM617 465h3v4h-3zM609 454h5v4h-5zM612 494h3v4h-3zM574 466h3v3h-3zM582 450h3v2h-3zM615 495h2v4h-2zM612 448h5v4h-5zM613 491h5v3h-5zM596 468h4v3h-4zM591 452h2v4h-2zM621 470h5v4h-5zM608 470h3v3h-3zM585 444h4v3h-4zM583 492h2v2h-2zM599 445h4v4h-4zM592 444h5v4h-5zM605 493h3v2h-3zM621 472h3v4h-3zM609 500h2v3h-2zM598 456h4v4h-4zM577 493h3v3h-3zM591 500h3v4h-3zM576 473h4v3h-4zM602 498h3v3h-3zM567 474h4v3h-4zM594 478h2v3h-2zM622 481h5v4h-5zM609 457h4v4h-4zM569 462h2v3h-2zM574 480h2v3h-2zM481 285h6v4h-6zM480 291h3v3h-3zM473 290h5v4h-5zM472 290h2v2h-2zM469 286h2v4h-2zM477 287h4v3h-4zM472 289h5v3h-5zM473 284h2v2h-2zM479 292h4v5h-4zM482 289h6v5h-6zM478 288h5v3h-5zM472 284h2v2h-2zM478 290h3v3h-3zM475 288h6v5h-6zM481 284h4v2h-4zM474 283h5v2h-5zM475 287h5v2h-5zM480 287h3v2h-3zM473 290h2v4h-2zM483 285h2v4h-2zM479 290h6v4h-6zM473 293h3v2h-3zM473 285h3v3h-3zM480 286h5v4h-5zM478 287h6v5h-6zM476 288h2v2h-2zM476 291h6v4h-6zM481 287h6v2h-6zM477 284h2v2h-2zM471 289h3v4h-3zM436 298h2v2h-2zM426 297h2v4h-2zM434 298h3v4h-3zM426 289h2v4h-2zM425 298h4v3h-4zM433 290h4v3h-4zM429 287h4v3h-4zM425 298h4v4h-4zM430 300h2v3h-2zM424 295h2v3h-2zM430 288h3v4h-3zM434 290h2v4h-2zM426 298h2v2h-2zM428 288h3v3h-3zM431 301h4v4h-4zM435 291h3v4h-3zM427 289h2v3h-2zM433 297h2v4h-2zM474 314h5v2h-5zM479 355h4v3h-4zM472 339h6v3h-6zM477 373h3v5h-3zM462 352h6v2h-6zM475 331h3v5h-3zM494 363h3v5h-3zM480 365h6v3h-6zM462 342h3v3h-3zM470 364h6v3h-6zM497 380h4v4h-4zM464 332h3v4h-3zM513 362h2v3h-2zM477 381h4v4h-4zM480 322h2v4h-2zM466 336h2v2h-2zM478 366h3v4h-3zM482 318h6v5h-6zM505 360h6v5h-6zM505 357h6v3h-6zM495 355h5v5h-5zM473 354h2v5h-2zM469 337h3v4h-3zM505 343h2v5h-2zM485 357h3v4h-3zM501 336h5v2h-5zM456 348h3v3h-3zM485 315h6v5h-6zM486 361h6v2h-6zM492 369h6v4h-6zM479 378h3v3h-3zM478 364h2v4h-2zM492 326h5v5h-5zM509 354h4v4h-4zM461 330h5v3h-5zM482 319h2v3h-2zM482 349h3v3h-3zM475 355h5v5h-5zM493 365h5v4h-5zM501 324h5v4h-5zM513 358h5v2h-5zM502 367h4v3h-4zM493 331h5v5h-5zM491 313h4v3h-4zM508 366h3v4h-3zM492 308h2v3h-2zM511 356h4v2h-4zM489 371h3v5h-3zM475 318h5v3h-5zM491 359h2v4h-2zM466 359h6v2h-6zM499 340h2v2h-2zM470 325h3v5h-3zM484 311h5v3h-5zM496 325h3v2h-3zM464 331h6v5h-6zM494 370h4v5h-4zM479 379h2v3h-2zM492 355h2v2h-2zM491 358h4v2h-4zM485 343h3v2h-3zM467 338h3v4h-3zM460 356h4v5h-4zM501 349h3v4h-3zM480 339h6v2h-6zM504 329h5v5h-5zM474 381h6v4h-6zM512 356h2v4h-2zM466 360h3v2h-3zM497 373h6v2h-6zM478 315h2v3h-2zM503 343h2v5h-2zM491 354h6v2h-6zM467 357h5v3h-5zM460 321h2v5h-2zM500 376h2v4h-2zM506 317h4v4h-4zM506 321h2v4h-2zM455 349h6v2h-6zM484 346h2v5h-2zM489 376h5v2h-5zM455 336h6v3h-6zM483 338h2v2h-2zM493 323h3v2h-3zM480 308h2v2h-2zM467 316h5v2h-5zM471 350h5v3h-5zM509 334h3v2h-3zM472 349h5v5h-5zM494 374h2v2h-2zM493 368h2v5h-2zM473 362h3v5h-3zM491 331h6v5h-6zM482 319h2v4h-2zM502 343h5v4h-5zM501 350h4v4h-4zM496 369h4v2h-4zM504 352h4v5h-4zM477 335h3v5h-3zM470 339h6v2h-6zM471 318h6v3h-6zM470 371h6v5h-6zM475 313h6v5h-6zM502 322h3v4h-3zM490 358h5v3h-5zM510 351h2v5h-2zM482 314h4v2h-4zM468 350h4v4h-4zM483 351h3v3h-3zM466 321h4v4h-4zM489 334h6v3h-6zM469 376h5v4h-5zM506 335h5v2h-5zM463 352h4v4h-4zM485 309h2v3h-2zM483 350h4v4h-4zM480 378h6v3h-6zM469 310h3v3h-3zM477 309h2v4h-2zM506 341h2v5h-2zM509 360h2v4h-2zM473 324h2v5h-2zM465 371h4v3h-4zM456 326h4v2h-4zM501 360h5v2h-5zM460 331h2v3h-2zM495 329h6v5h-6zM499 315h4v4h-4zM469 316h5v5h-5zM464 325h3v2h-3zM482 375h2v3h-2zM510 324h6v4h-6zM507 317h5v2h-5zM510 336h2v2h-2zM481 332h3v5h-3zM461 334h4v3h-4zM498 321h5v3h-5zM480 318h5v5h-5zM488 329h3v4h-3zM483 331h5v2h-5zM463 346h3v5h-3zM504 316h3v4h-3zM480 327h3v3h-3zM460 329h3v2h-3zM463 355h5v4h-5zM485 340h6v4h-6zM465 340h5v3h-5zM471 321h3v3h-3zM497 322h2v2h-2zM507 362h4v3h-4zM466 353h3v4h-3zM466 312h6v5h-6zM485 333h4v5h-4zM459 338h5v3h-5zM506 327h3v4h-3zM456 360h6v2h-6zM475 377h6v2h-6zM461 361h4v5h-4zM489 374h4v2h-4zM511 344h6v2h-6zM486 347h2v3h-2zM465 315h4v2h-4zM498 327h6v5h-6zM485 360h2v4h-2zM506 361h2v4h-2zM461 344h6v4h-6zM507 348h3v3h-3zM463 350h5v3h-5zM492 359h6v2h-6zM478 378h4v4h-4zM482 375h5v4h-5zM494 376h2v4h-2zM486 380h4v3h-4zM496 368h2v4h-2zM473 348h4v5h-4zM476 368h3v3h-3zM483 357h5v2h-5zM494 377h2v2h-2zM496 366h6v4h-6zM489 374h2v2h-2zM478 362h5v3h-5zM499 352h4v4h-4zM489 345h6v4h-6zM473 365h3v5h-3zM474 346h4v5h-4zM487 352h2v4h-2zM495 366h6v3h-6zM490 348h4v5h-4zM497 353h5v5h-5zM480 348h6v5h-6zM499 357h4v3h-4zM496 350h6v4h-6zM485 352h3v4h-3zM487 365h4v5h-4zM490 362h5v4h-5zM492 345h3v3h-3zM483 368h3v3h-3zM488 376h6v2h-6zM492 371h5v4h-5zM494 370h3v5h-3zM493 365h5v5h-5zM499 364h5v4h-5zM496 366h5v5h-5zM491 352h4v4h-4zM481 362h6v5h-6zM489 340h5v5h-5zM483 348h4v3h-4zM483 356h3v2h-3zM495 354h6v3h-6zM483 378h2v2h-2zM471 364h5v4h-5zM498 372h6v5h-6zM486 362h5v5h-5zM484 342h4v5h-4zM498 368h6v3h-6zM473 356h5v3h-5zM485 358h6v4h-6zM491 371h2v3h-2zM481 355h2v4h-2zM485 345h4v4h-4zM497 358h3v4h-3zM494 349h3v5h-3zM475 366h6v2h-6zM481 382h2v5h-2zM491 363h4v5h-4zM495 365h2v3h-2zM475 372h6v4h-6zM485 346h3v5h-3zM488 346h6v2h-6zM498 361h5v5h-5zM494 343h2v4h-2zM474 350h4v3h-4zM471 366h6v2h-6zM480 359h5v2h-5zM487 380h5v2h-5zM489 350h2v3h-2zM479 378h5v4h-5zM483 351h5v2h-5zM477 356h6v3h-6zM482 357h5v2h-5zM494 350h3v3h-3zM481 348h4v5h-4zM487 345h6v5h-6zM480 367h2v5h-2zM495 355h3v5h-3zM476 352h3v5h-3zM471 368h4v3h-4zM477 345h3v4h-3zM486 373h6v5h-6zM484 373h3v3h-3zM481 349h5v5h-5zM489 364h4v5h-4zM485 350h5v3h-5zM488 358h4v3h-4zM482 361h3v2h-3zM490 344h4v5h-4zM471 370h3v4h-3zM470 370h3v3h-3zM480 368h2v2h-2zM487 355h6v4h-6zM482 396h2v3h-2zM484 398h5v4h-5zM485 399h5v3h-5zM485 398h4v5h-4zM479 396h5v3h-5zM496 390h2v3h-2zM484 387h6v3h-6zM491 383h2v3h-2zM486 397h3v5h-3zM492 393h3v3h-3zM489 396h4v5h-4zM490 394h2v2h-2zM493 398h4v2h-4zM494 394h2v3h-2zM491 383h4v3h-4zM492 389h2v5h-2zM491 390h6v3h-6zM484 384h5v5h-5zM495 396h5v2h-5zM491 386h6v3h-6zM487 386h6v4h-6zM482 385h3v4h-3zM483 383h4v4h-4zM486 386h4v3h-4zM481 396h5v3h-5zM491 382h5v3h-5zM495 389h4v3h-4zM494 385h6v3h-6zM485 398h6v5h-6zM492 385h3v5h-3zM493 390h3v2h-3zM491 382h5v3h-5zM484 384h4v5h-4zM487 393h4v3h-4zM488 383h5v5h-5zM480 396h6v4h-6zM481 392h5v5h-5zM482 393h2v4h-2zM495 395h6v4h-6zM490 384h2v2h-2zM492 399h4v4h-4zM482 395h3v2h-3zM492 399h6v4h-6zM485 395h4v4h-4zM483 385h4v4h-4zM526 393h5v2h-5zM533 399h5v4h-5zM526 396h2v2h-2zM531 394h5v4h-5zM524 399h3v2h-3zM532 405h5v2h-5zM527 402h5v3h-5zM531 398h2v3h-2zM532 402h3v3h-3zM525 397h5v3h-5zM534 401h2v4h-2zM531 401h4v4h-4zM530 406h5v4h-5zM530 396h4v4h-4zM526 402h5v4h-5zM525 402h4v4h-4zM558 435h6v3h-6zM557 435h2v3h-2zM552 444h6v2h-6zM552 443h2v3h-2zM557 432h5v3h-5zM557 431h6v2h-6zM560 444h6v2h-6zM562 440h5v3h-5zM562 437h2v2h-2zM556 440h6v3h-6zM556 429h4v2h-4zM555 428h2v2h-2zM560 445h5v4h-5zM551 430h2v3h-2zM557 444h4v3h-4zM555 443h2v4h-2zM551 434h6v4h-6zM560 428h6v4h-6zM550 437h6v2h-6zM553 434h5v2h-5zM562 438h2v2h-2zM556 428h4v3h-4zM562 440h3v4h-3zM557 440h4v5h-4zM549 434h3v5h-3zM557 444h2v2h-2zM552 443h6v5h-6zM559 436h3v2h-3zM554 437h4v3h-4zM558 428h3v4h-3zM560 433h5v5h-5zM563 433h4v5h-4zM554 427h5v2h-5zM558 441h3v4h-3zM555 428h4v4h-4zM558 437h3v2h-3zM550 431h5v2h-5zM554 432h3v3h-3zM559 433h4v4h-4zM557 439h4v5h-4zM502 278h4v3h-4zM504 280h3v3h-3zM501 270h5v3h-5zM503 276h4v2h-4zM505 269h4v3h-4zM506 275h4v2h-4zM508 276h2v4h-2zM501 276h5v3h-5zM509 277h2v3h-2zM502 270h4v4h-4zM502 278h3v2h-3zM503 270h4v4h-4zM505 270h2v2h-2zM505 268h4v4h-4zM428 269h2v4h-2zM434 265h4v3h-4zM440 280h4v2h-4zM426 275h2v2h-2zM444 273h5v4h-5zM437 288h2v2h-2zM454 279h4v2h-4zM437 282h4v2h-4zM427 268h3v4h-3zM449 266h4v3h-4zM435 282h3v4h-3zM455 279h3v4h-3zM444 285h5v2h-5zM449 272h5v4h-5zM433 278h4v2h-4zM432 279h2v4h-2zM429 280h5v2h-5zM454 280h2v2h-2zM441 269h3v3h-3zM454 274h3v2h-3zM452 286h3v4h-3zM440 281h4v3h-4zM439 272h2v2h-2zM445 264h5v4h-5zM442 275h5v4h-5zM444 270h4v2h-4zM432 275h3v3h-3zM431 284h4v3h-4zM452 277h3v3h-3zM452 287h4v2h-4zM608 147h4v2h-4zM597 154h3v4h-3zM604 151h5v3h-5zM600 154h3v4h-3zM583 153h5v3h-5zM595 146h4v2h-4zM608 146h2v3h-2zM605 145h3v5h-3zM604 145h4v5h-4zM607 152h2v3h-2zM598 147h5v2h-5zM605 145h4v2h-4zM610 145h5v3h-5zM598 144h3v3h-3zM602 150h2v4h-2zM588 145h3v2h-3zM590 145h2v3h-2zM598 148h6v4h-6zM590 148h2v5h-2zM599 150h5v4h-5zM594 148h5v5h-5zM613 148h5v5h-5zM616 190h2v3h-2zM612 190h4v5h-4zM613 170h6v2h-6zM614 176h5v4h-5zM609 182h5v5h-5zM610 182h5v3h-5zM616 187h5v4h-5zM614 177h6v4h-6zM612 184h4v2h-4zM612 181h3v4h-3zM605 188h4v5h-4zM611 192h2v4h-2zM610 181h4v3h-4zM613 172h5v3h-5zM612 188h2v4h-2zM607 188h5v2h-5zM608 185h5v2h-5zM607 184h6v4h-6zM609 170h5v4h-5zM620 185h5v5h-5zM614 172h6v3h-6zM609 184h6v4h-6zM610 187h4v2h-4zM611 168h4v2h-4zM611 175h6v4h-6zM618 174h4v5h-4zM601 183h2v3h-2zM605 187h2v5h-2zM607 169h4v5h-4zM608 183h4v4h-4zM604 188h3v3h-3zM611 170h3v4h-3zM608 177h5v5h-5zM619 183h2v2h-2zM611 179h5v5h-5zM608 179h2v5h-2zM607 171h2v3h-2zM615 178h2v4h-2zM611 186h5v2h-5zM611 168h5v2h-5zM617 173h5v2h-5zM616 173h4v5h-4zM617 181h5v3h-5zM617 171h4v3h-4zM610 168h6v4h-6zM610 170h5v4h-5zM613 175h5v5h-5zM613 175h3v5h-3zM616 189h4v4h-4zM610 177h5v5h-5zM614 171h4v3h-4zM609 185h2v4h-2zM608 173h3v5h-3zM608 185h3v3h-3zM600 178h2v2h-2zM602 189h6v5h-6zM603 190h6v3h-6zM609 184h4v3h-4zM610 172h3v2h-3zM609 173h2v2h-2zM626 169h4v5h-4zM629 164h2v3h-2zM624 165h6v4h-6zM629 169h4v4h-4zM625 171h3v3h-3zM625 163h5v3h-5zM628 165h6v2h-6zM623 164h3v5h-3zM625 167h2v4h-2zM627 166h4v2h-4zM629 167h2v3h-2zM626 171h6v2h-6zM623 167h3v4h-3zM621 168h2v4h-2zM556 200h4v2h-4zM556 202h5v2h-5zM557 202h2v3h-2zM561 207h5v2h-5zM561 199h3v4h-3zM558 198h2v4h-2zM559 203h3v3h-3zM559 202h4v4h-4zM560 200h3v4h-3zM562 202h5v3h-5zM517 195h2v3h-2zM517 193h2v4h-2zM514 197h4v3h-4zM518 197h3v4h-3zM522 195h2v2h-2zM521 196h3v4h-3zM521 192h3v2h-3zM517 195h2v3h-2zM467 219h3v1h-3zM442 242h3v1h-3zM486 217h2v1h-2zM427 243h3v1h-3zM486 230h2v1h-2zM455 233h1v1h-1zM435 238h1v1h-1zM485 251h1v1h-1zM494 247h3v1h-3zM460 237h2v1h-2zM481 244h1v1h-1zM488 252h1v2h-1zM468 252h2v2h-2zM434 254h2v1h-2zM481 254h3v1h-3zM457 253h3v2h-3zM481 242h3v1h-3zM429 251h2v1h-2zM442 242h3v1h-3zM491 241h3v1h-3zM454 251h3v2h-3zM487 233h1v1h-1zM474 254h2v2h-2zM461 214h1v2h-1zM456 243h2v1h-2zM449 223h2v2h-2zM488 243h2v2h-2zM431 226h3v2h-3zM455 239h1v1h-1zM440 244h2v1h-2zM454 229h1v2h-1zM437 230h3v2h-3zM447 229h3v1h-3zM454 213h1v1h-1zM496 235h3v2h-3zM480 246h3v2h-3zM434 250h2v2h-2zM430 244h2v2h-2zM497 231h3v2h-3zM495 253h1v2h-1zM607 152h2v2h-2zM602 148h4v3h-4zM611 153h2v4h-2zM607 142h4v3h-4zM603 156h6v2h-6zM609 157h3v4h-3zM608 148h2v5h-2zM607 157h4v4h-4zM605 155h5v2h-5zM612 147h3v3h-3zM608 155h3v4h-3zM611 145h4v2h-4zM609 157h4v3h-4zM604 155h5v3h-5zM609 156h5v2h-5zM610 147h4v5h-4zM612 149h2v3h-2zM614 151h6v5h-6zM610 154h4v2h-4zM602 153h5v5h-5zM611 146h4v5h-4zM608 146h2v4h-2zM490 192h3v2h-3zM471 340h2v1h-2zM419 286h2v1h-2zM435 306h3v1h-3zM555 253h3v2h-3zM480 270h2v2h-2zM573 304h1v2h-1zM534 334h1v1h-1zM468 201h2v1h-2zM500 326h3v1h-3zM516 255h3v2h-3zM557 299h1v1h-1zM444 326h1v1h-1zM549 321h3v2h-3zM576 211h3v2h-3zM522 234h1v2h-1zM522 335h2v1h-2zM472 281h1v2h-1zM405 273h1v2h-1zM444 263h1v2h-1zM455 199h2v1h-2zM422 226h3v2h-3zM593 275h1v1h-1zM511 321h2v1h-2zM445 218h3v2h-3zM485 200h3v2h-3zM545 284h2v2h-2zM502 284h1v1h-1zM466 348h1v2h-1zM515 259h3v2h-3zM438 289h1v2h-1zM433 312h1v1h-1zM488 222h3v1h-3zM555 222h3v2h-3zM550 342h3v1h-3zM413 223h1v2h-1zM512 290h3v2h-3zM598 239h1v1h-1zM538 257h1v2h-1zM555 245h1v2h-1zM555 265h1v2h-1zM559 266h1v1h-1zM506 230h2v1h-2zM471 295h1v2h-1zM487 307h2v1h-2zM562 325h1v1h-1zM517 251h1v1h-1zM493 197h3v1h-3zM572 244h3v2h-3zM497 292h1v1h-1zM449 335h2v1h-2zM589 260h3v2h-3zM552 281h3v1h-3zM572 217h3v1h-3zM543 265h2v1h-2zM424 270h2v1h-2zM540 318h1v1h-1zM478 316h1v1h-1zM449 335h1v1h-1zM448 339h1v1h-1zM586 292h2v2h-2zM408 265h2v1h-2zM552 331h1v1h-1zM429 275h3v2h-3zM421 316h2v1h-2zM530 204h3v1h-3zM541 296h3v2h-3zM491 297h3v1h-3zM562 263h1v1h-1zM534 347h3v1h-3zM509 246h1v1h-1zM546 326h1v1h-1zM474 238h2v1h-2zM499 282h2v1h-2zM423 301h3v1h-3zM504 263h2v1h-2zM583 307h1v1h-1zM567 305h1v1h-1zM570 259h1v1h-1zM524 237h2v1h-2zM451 238h2v1h-2zM465 205h2v1h-2zM596 295h2v2h-2zM455 230h2v1h-2zM468 277h2v2h-2zM448 245h1v1h-1zM421 322h2v2h-2zM525 249h3v1h-3zM506 294h3v1h-3zM588 255h3v1h-3zM530 225h1v2h-1zM486 209h1v2h-1zM523 217h3v2h-3zM551 230h2v1h-2zM528 289h3v1h-3zM531 286h3v2h-3zM461 200h1v1h-1zM511 306h3v2h-3zM584 262h1v2h-1zM461 255h3v1h-3zM489 307h1v2h-1zM468 323h1v2h-1zM566 226h1v2h-1zM534 234h1v1h-1zM556 296h2v2h-2zM436 213h1v1h-1zM477 294h3v1h-3zM412 237h2v1h-2zM587 247h3v1h-3zM428 316h2v2h-2zM473 274h1v1h-1zM582 217h2v1h-2zM445 221h1v2h-1zM571 229h2v2h-2zM533 324h1v2h-1zM406 260h1v1h-1zM492 304h1v2h-1zM424 267h1v1h-1zM485 200h1v1h-1zM453 261h1v2h-1zM511 201h1v2h-1zM549 280h2v1h-2zM412 259h1v1h-1zM504 272h2v1h-2zM420 266h2v2h-2zM557 211h2v2h-2zM420 235h2v1h-2zM496 219h1v1h-1zM529 300h1v1h-1zM555 296h1v2h-1zM429 319h2v1h-2zM571 249h3v1h-3zM540 193h2v1h-2zM490 326h2v2h-2zM461 240h1v1h-1zM480 299h1v2h-1zM590 227h2v2h-2zM502 342h2v1h-2zM524 225h2v1h-2zM462 315h2v1h-2zM483 303h3v2h-3zM554 228h1v1h-1zM522 231h2v2h-2zM512 304h1v2h-1zM448 209h2v1h-2zM427 241h1v1h-1zM447 217h3v2h-3zM558 231h3v1h-3zM454 341h2v1h-2zM458 236h1v1h-1zM426 292h4v4h-4zM433 291h2v3h-2zM421 294h4v4h-4zM431 284h4v4h-4zM420 288h4v4h-4zM438 295h2v4h-2zM434 285h4v2h-4zM427 287h3v3h-3zM420 289h3v4h-3zM426 301h3v3h-3zM436 288h5v3h-5zM417 285h3v3h-3zM417 291h5v4h-5zM426 282h5v3h-5zM431 288h5v3h-5zM418 291h2v4h-2zM434 284h4v2h-4zM443 297h3v4h-3zM421 293h3v3h-3zM437 287h4v2h-4zM669 450h2v2h-2zM670 450h5v4h-5zM665 442h2v2h-2zM658 445h3v2h-3zM660 454h3v2h-3zM658 445h5v3h-5zM658 447h4v3h-4zM668 453h4v2h-4zM671 445h4v2h-4zM670 446h5v2h-5zM660 454h2v2h-2zM670 447h4v4h-4zM657 446h2v3h-2zM658 450h3v4h-3zM544 568h3v2h-3zM556 569h5v3h-5zM537 587h5v3h-5zM554 570h6v4h-6zM553 547h2v3h-2zM546 556h5v3h-5zM559 555h4v4h-4zM545 562h4v5h-4zM540 581h2v4h-2zM546 553h3v5h-3zM531 561h6v4h-6zM552 569h4v2h-4zM542 569h4v3h-4zM544 588h5v4h-5zM547 584h4v2h-4zM533 568h4v3h-4zM545 576h4v2h-4zM557 578h4v5h-4zM547 552h2v2h-2zM551 572h2v4h-2zM535 572h5v3h-5zM538 564h5v4h-5zM542 590h5v2h-5zM560 581h5v5h-5zM537 554h4v5h-4zM543 555h3v3h-3zM559 570h6v4h-6zM546 586h3v4h-3zM540 581h4v3h-4zM551 548h2v3h-2zM548 546h4v2h-4zM540 587h4v4h-4zM540 576h5v5h-5zM539 592h2v5h-2zM554 583h6v3h-6zM556 577h2v3h-2zM554 586h4v4h-4zM542 587h3v3h-3zM547 562h2v4h-2zM559 554h4v3h-4zM558 572h2v5h-2zM560 569h5v3h-5zM553 563h2v2h-2zM542 576h5v2h-5zM536 568h5v4h-5zM540 577h6v5h-6zM540 562h4v4h-4zM548 550h6v2h-6zM545 566h3v3h-3zM537 572h2v2h-2zM545 573h2v3h-2zM544 550h6v4h-6zM556 584h4v2h-4zM537 582h2v3h-2zM542 592h5v3h-5zM542 580h5v3h-5zM540 595h6v3h-6zM546 583h2v3h-2zM549 564h6v3h-6zM536 591h6v2h-6zM558 563h2v3h-2zM546 590h3v5h-3zM560 573h3v3h-3zM550 585h5v3h-5zM549 558h4v3h-4zM543 571h5v2h-5zM541 581h3v4h-3zM537 586h3v3h-3zM559 555h6v2h-6zM554 581h3v4h-3zM557 566h6v2h-6zM546 545h2v2h-2zM559 573h5v3h-5zM540 554h3v4h-3zM543 581h3v3h-3zM535 566h6v5h-6zM540 553h3v5h-3zM533 555h4v2h-4zM546 554h5v5h-5zM555 575h5v4h-5zM545 555h6v3h-6zM546 557h4v5h-4zM561 565h4v5h-4zM541 580h5v3h-5zM545 587h6v2h-6zM545 570h5v5h-5zM550 553h2v3h-2zM550 579h5v4h-5zM549 579h4v3h-4zM548 565h3v4h-3zM651 420h5v3h-5zM652 442h4v4h-4zM656 443h5v2h-5zM651 416h4v2h-4zM652 416h4v4h-4zM656 410h4v3h-4zM662 404h5v2h-5zM646 407h3v2h-3zM651 407h5v3h-5zM647 424h2v2h-2zM654 406h5v4h-5zM652 401h3v4h-3zM647 411h2v2h-2zM651 431h3v2h-3zM654 401h3v4h-3zM652 444h3v3h-3zM647 440h4v3h-4zM653 419h5v2h-5zM666 432h3v2h-3zM648 404h4v4h-4zM660 399h2v3h-2zM656 441h2v3h-2zM654 397h4v4h-4zM653 444h2v4h-2zM655 421h5v2h-5zM659 396h2v3h-2zM653 430h5v4h-5zM659 413h5v4h-5zM664 427h4v3h-4zM649 430h2v4h-2zM826 411h3v2h-3zM833 412h3v2h-3zM845 422h1v1h-1zM809 397h2v2h-2zM820 418h1v1h-1zM820 400h2v2h-2zM838 428h2v2h-2zM838 441h1v2h-1zM824 398h2v2h-2zM796 431h2v2h-2zM795 422h3v2h-3zM831 434h3v2h-3zM811 444h2v2h-2zM836 441h2v1h-2zM821 444h3v1h-3zM805 443h1v2h-1zM813 397h1v1h-1zM812 420h3v1h-3zM829 413h3v1h-3zM843 431h1v1h-1zM836 408h1v1h-1zM840 405h1v2h-1zM799 396h1v2h-1zM822 424h2v1h-2zM834 433h3v2h-3zM797 420h3v1h-3zM826 425h2v1h-2zM812 448h3v2h-3zM788 422h3v2h-3zM792 445h2v2h-2zM791 427h2v2h-2zM819 403h1v2h-1zM795 399h2v2h-2zM822 426h3v2h-3zM813 448h1v1h-1zM805 428h2v2h-2zM844 407h3v1h-3zM809 405h1v1h-1zM815 432h1v1h-1zM826 448h1v1h-1zM799 450h1v2h-1zM802 426h1v2h-1zM804 435h3v1h-3zM793 442h1v1h-1zM842 408h3v2h-3zM825 415h3v1h-3zM830 408h1v2h-1zM805 432h1v1h-1zM846 429h3v2h-3zM792 436h3v1h-3zM585 499h4v4h-4zM582 471h3v2h-3zM588 495h3v3h-3zM587 487h5v3h-5zM586 494h2v2h-2zM585 474h2v2h-2zM592 479h2v3h-2zM588 481h5v2h-5zM583 490h2v3h-2zM583 475h4v2h-4zM584 468h4v2h-4zM587 501h3v4h-3zM582 477h4v2h-4zM589 481h3v4h-3zM813 315h3v4h-3zM812 306h2v3h-2zM801 312h3v4h-3zM806 305h3v3h-3zM804 310h3v3h-3zM806 304h2v4h-2zM810 324h4v2h-4zM804 316h3v2h-3zM806 316h5v2h-5zM808 324h2v3h-2zM808 311h3v2h-3zM810 311h5v3h-5zM801 314h5v2h-5zM802 311h3v4h-3zM810 316h2v4h-2zM812 301h4v2h-4zM856 315h4v3h-4zM858 318h5v4h-5zM872 311h5v3h-5zM859 310h5v2h-5zM868 311h4v4h-4zM857 318h2v4h-2zM859 311h4v2h-4zM861 319h5v4h-5zM871 318h3v3h-3zM865 314h4v2h-4zM829 350h3v4h-3zM827 350h2v3h-2zM830 351h2v4h-2zM827 344h5v3h-5zM831 346h5v4h-5zM827 348h2v3h-2zM831 353h3v4h-3zM830 347h4v3h-4zM828 353h3v2h-3zM840 348h4v4h-4zM829 342h2v3h-2zM828 342h4v2h-4zM810 408h3v1h-3zM820 402h2v2h-2zM810 405h2v2h-2zM816 399h3v1h-3zM835 401h1v1h-1zM810 429h1v2h-1zM816 390h2v1h-2zM795 397h3v2h-3zM854 404h1v2h-1zM840 422h1v2h-1zM810 419h3v1h-3zM801 414h3v1h-3zM807 393h1v1h-1zM819 424h2v1h-2zM789 400h3v1h-3zM822 389h1v2h-1zM808 405h2v1h-2zM845 395h3v1h-3zM813 384h3v2h-3zM805 425h2v2h-2zM813 395h3v1h-3zM840 428h3v2h-3zM838 434h1v2h-1zM818 394h1v1h-1zM812 406h3v2h-3zM807 421h3v2h-3zM822 409h2v2h-2zM846 394h2v2h-2zM845 415h3v2h-3zM806 387h3v2h-3zM844 402h3v2h-3zM796 419h1v2h-1zM848 394h1v1h-1zM823 402h2v1h-2zM799 421h1v2h-1zM813 431h2v2h-2zM833 409h2v1h-2zM824 386h1v1h-1zM805 417h1v1h-1zM832 430h2v1h-2zM836 422h1v1h-1zM806 399h1v1h-1zM833 423h2v1h-2zM838 402h2v1h-2zM843 418h1v1h-1zM829 384h3v1h-3zM805 429h1v1h-1zM817 428h3v2h-3zM823 429h1v2h-1zM848 401h1v1h-1z" fill="#ff0000"/>
<polygon points="556.5,103 599,91.8 636.5,80.5 633.5,84.2 629.5,95.5 599,101.8 584,104.5" fill="#ffffff"/>
<polygon points="651.6,87.4 656.2,91.1 660,100.5 658.1,106.1 654.4,106.1 653.4,94.9" fill="#ffffff"/>
<polygon points="402.5,460 422.5,457.5 435,462.5 442.5,475 442.5,496.2 426.2,498.8 422.5,490 410,480 400,472.5" fill="#ffffff"/>
<polygon points="480,512.5 490,515 512.5,516.2 512.5,530 515,550 492.5,550 485,542.5 487.5,527.5 482.5,525" fill="#ffffff"/>
<polygon points="552.5,590 575,592.5 573.8,602.5 562.5,601.2 560,610 551.2,602.5" fill="#ffffff"/>
<polygon points="487.5,472.5 502.5,471.2 500,487.5 490,490" fill="#ffffff"/>
<polygon points="365,430 385,430 382.5,440 372.5,437.5" fill="#ffffff"/>
<polygon points="733.8,457.5 753.8,458 751.2,467.5 745,476.2 735,483.8" fill="#ffffff"/>
<polygon points="625,516.2 642.5,507.5 660,500 670,495.5 665,498.8 645,509.5 631.2,518 627,526.2" fill="#ffffff"/>
<polygon points="833.5,456 868.8,456.9 867,481.8 855,479.6 846.4,473.2 837.8,468.9 832.7,464.6" fill="#ffffff"/>
<polygon points="417.8,417.3 435,421.6 452.2,432.4 478,432.4 499.5,441 503.8,449.6 482.3,447.4 460.8,447.4 439.3,443.1 426.4,432.4" fill="#ffffff"/>
<polygon points="362,421.6 374.8,419.5 383.4,425.9 381.3,438.8 392,447.4 400.6,451.7 387.7,452.6 374.8,445.3 366.2,432.4" fill="#ffffff"/>
<path d="M460 447h5v2h-5zM467 442h2v5h-2zM468 433h2v5h-2zM441 440h2v4h-2zM472 437h5v2h-5zM445 438h6v4h-6zM474 436h2v4h-2zM465 442h3v4h-3zM465 432h3v2h-3zM450 447h4v5h-4zM457 439h2v4h-2zM470 446h5v4h-5zM473 443h6v2h-6zM455 433h4v3h-4zM453 445h2v5h-2zM458 432h6v2h-6zM461 444h2v4h-2zM446 444h2v3h-2zM465 443h4v5h-4zM465 440h5v2h-5zM458 437h3v4h-3zM441 442h3v5h-3zM460 436h2v3h-2zM455 443h3v3h-3zM446 441h6v5h-6zM463 433h5v5h-5zM471 441h3v4h-3zM454 445h6v5h-6zM459 446h2v2h-2zM463 444h4v5h-4zM456 431h2v5h-2zM468 434h4v3h-4zM441 436h6v3h-6zM461 431h3v5h-3zM478 437h6v4h-6zM443 436h4v5h-4zM468 444h2v3h-2zM475 444h4v3h-4zM475 443h4v5h-4zM455 438h6v5h-6zM455 433h6v3h-6zM468 447h3v3h-3zM470 435h4v2h-4zM469 437h5v4h-5zM461 444h5v3h-5zM474 434h6v3h-6zM472 439h6v2h-6zM457 447h3v4h-3zM443 441h5v4h-5zM465 446h2v3h-2zM373 450h5v3h-5zM379 436h4v4h-4zM385 442h5v4h-5zM372 438h5v3h-5zM359 447h2v2h-2zM370 436h3v2h-3zM373 434h2v2h-2zM374 442h2v2h-2zM356 436h4v3h-4zM373 438h3v3h-3zM384 439h3v3h-3zM367 444h3v2h-3zM363 448h2v2h-2zM393 439h2v3h-2zM360 444h3v2h-3zM367 435h3v3h-3zM392 434h4v2h-4zM369 431h4v3h-4zM376 441h3v3h-3zM362 437h5v4h-5zM509 458h4v3h-4zM505 462h3v3h-3zM483 473h5v3h-5zM491 457h3v3h-3zM503 466h5v3h-5zM471 465h4v4h-4zM495 469h4v3h-4zM498 466h2v2h-2zM477 470h4v4h-4zM489 467h4v3h-4zM479 472h2v2h-2zM481 462h4v4h-4zM495 478h2v2h-2zM499 471h4v4h-4zM488 466h2v3h-2zM483 460h3v3h-3zM492 465h2v2h-2zM511 458h2v2h-2zM491 476h4v2h-4zM497 464h5v3h-5zM488 461h5v3h-5zM478 468h4v4h-4zM504 459h5v3h-5zM495 459h5v3h-5zM480 457h3v2h-3zM498 470h3v2h-3zM512 471h2v3h-2zM492 461h4v3h-4zM504 476h2v3h-2zM486 455h5v4h-5zM460 478h4v2h-4zM451 466h4v4h-4zM459 473h3v2h-3zM454 489h5v4h-5zM459 469h5v3h-5zM453 474h5v3h-5zM441 470h5v2h-5zM457 467h4v4h-4zM447 473h4v4h-4zM443 469h3v2h-3zM460 468h5v2h-5zM458 486h5v2h-5zM465 476h4v3h-4zM455 474h3v4h-3zM443 474h2v2h-2zM445 472h5v2h-5zM465 474h5v3h-5zM444 485h3v2h-3zM449 479h2v4h-2zM450 489h5v2h-5z" fill="#ffffff"/>
</g>
<polyline points="899.8,312 906.3,334.5 898.8,342 883.8,352 873.8,362 867.8,379.5 863.8,397 862.8,409.5 868.8,419.5" fill="none" stroke="#fff" stroke-width="1"/>
<polygon points="268,260.5 278,253 290.5,248 293,242 298,237.5 304,242 315.5,243 318,247 330.5,250.5 343,247.5 353,246 358,238 368,231 375.5,225.5 382,219 387,209 390,200.5 389,193.5 394,188 402,190.5 408,192 418,193.5 424,190 434,193 446.5,185.5 441.5,173 449,160.5 455,158 461.5,170.5 478,188 485,192 488,168 501.5,163 495,155.5 504,140.5 494,134 496.5,124 504,122 508,114 531.5,110.5 534,107.5 556.5,103 599,92 636.5,80.5 649,80.5 651.6,87.4 656,91 660,100.5 658,106 650.6,110 647.8,115.5 650.6,125 658,122 662,116.4 669.4,120 676,125 672,131.4 672,138 678.8,133.3 682.5,140 693.8,138 705,139 712.5,145.5 717,156.8 717,166 710.6,173.6 707,180 699.4,186.8 695.6,192.4 690,196 693.8,200.5 701,195.5 707.8,190.5 708.8,185 718,184 720,192.4 735,192.4 740.6,198 748,198 765,191.4 772.5,194 787.5,200 805,200.5 820,203 831,201 833,207.4 830,220 834.4,237 848,247.5 857.6,249.6 858.6,264.4 860,277 870,287 885,292 897.5,297 901,312 907.5,334.5 900,342 885,352 875,362 869,379.5 865,397 864,409.5 870,419.5 882.5,427 887.5,437 884,446 874,456 869,468 867,482 855,480 846,473 838,469 831,465 829,450 827.5,446 820,442 815,434.5 805,429.5 800,424.5 791,422 787.5,414.5 785,422 780,427 776,441 767.5,440 757.5,445 755,457.5 751,467.5 742.5,479 732.5,486 720,490 710,495 699,500 692.5,497.5 680,499 674,495 665,499 655,504 645,509 635,515 627.5,525 626,537.5 627.5,555 621,565 626,577.5 632.5,587.5 622.5,599 610,597.5 597.5,605 585,600 575,602.5 565,597.5 560,610 550,602.5 552.5,592.5 540,585 532.5,577.5 522.5,574 527.5,565 520,557.5 512.5,550 492.5,550 485,542.5 482.5,525 479,517.5 485,510 470,505 462.5,499 442.5,495 426,499 422.5,490 410,480 400,472.5 405,460 400,454 395,455 377.5,447.5 372.5,440 365,434 353,426 368,417 373,407 383,397 382,392 384,383 393,387 398,394.5 405.5,384.5 412,377 414,362 410.5,357 398,358 393,353 383,349.5 380.5,343 375.5,342 365.5,344.5 354,354.5 343,347 333,337 333,324.5 328,312 315.5,306 305.5,308 293,303 288,284.5 275.5,274.5 265.5,262" fill="none" stroke="#000" stroke-width="1"/>
<polyline points="168,202 183,212 180.5,228 190,222 200.5,223 212,236 223,248 238,257 253,254 268,260.5" fill="none" stroke="#000" stroke-width="1"/>
<polyline points="168,88 176,86 179,79" fill="none" stroke="#000" stroke-width="1"/>
<polyline points="540,585 532.5,582.5 515,592.5 507.5,600 505,605" fill="none" stroke="#000" stroke-width="1"/>
<polyline points="485,542.5 477.5,540 481,525" fill="none" stroke="#000" stroke-width="1"/>
<g shape-rendering="auto">
<polyline points="599,92 599,113 611,126.8 624,138 635.6,151 648.8,168 662,175.5 678.8,176.4 683.4,185 686,191.4" fill="none" stroke="#101020" stroke-width="1"/>
<polyline points="579,189 584,186.8 589,190.5 596.5,203 604,213 609,215.5 619,203 636.5,200.5 654,201.8 669,195.5 680,191.8" fill="none" stroke="#101020" stroke-width="1"/>
<polyline points="579,189 580,198 586.5,213 596.5,223 599,233 619,238 629,240.5 631.5,233" fill="none" stroke="#101020" stroke-width="1"/>
<polyline points="424,201.8 434,203 436.5,213 446.5,221.8 454,215.5 471.5,228 472.8,245.5 461.5,253 459,262 464,272 481.5,274.5 482.8,289.5 494,304.5 504,314.5 511.5,327 519,339.5" fill="none" stroke="#101020" stroke-width="1"/>
<polyline points="519,339.5 531.5,339.5 539,332 541.5,319.5 554,309.5 566.5,302 584,303.2 596.5,300.8 601.5,307 614,304.5 629,302 644,303.2 654,307 664,309.5 680,304.5 695,304" fill="none" stroke="#101020" stroke-width="1"/>
<polyline points="519,339.5 514,349.5 511.5,362 506.5,372 499,382 496.5,392 499,387 509,384.5 516.5,379.5 524,384.5 534,389.5 537.8,399.5 534,412 529,422 526.5,437 519,446 515,447.5" fill="none" stroke="#101020" stroke-width="1"/>
<polyline points="412,377 424,369.5 431.5,375.8 444,377 459,378.2 474,382 486.5,379.5 496.5,384.5" fill="none" stroke="#101020" stroke-width="1"/>
<polyline points="594,352 604,354.5 616.5,355.8 626.5,354.5 629,359.5 624,369.5 619,372 624,379.5 621.5,387 609,384.5 599,387 596.5,377 594,367 596.5,359.5 594,352" fill="none" stroke="#101020" stroke-width="1"/>
<polyline points="646.5,305 646.5,319.5 651.5,332 657.8,339.5 659,352 654,362 644,372 639,379.5 631.5,385.8 627.8,392 631.5,398.2 639,397 641.5,404.5 634,412 629,420.8" fill="none" stroke="#101020" stroke-width="1"/>
<polyline points="625,421.8 640.6,420.4 656.2,422.7 662,425.7 669,412 674,402 680,397" fill="none" stroke="#101020" stroke-width="1"/>
<polyline points="695.6,305.6 693.8,318.8 697.5,337.5 699.4,356.2 698.4,375 690,380.6 678.8,384.4 674,393.8 672,408.8 667.5,420 661.9,425.6 656.2,438 655,440" fill="none" stroke="#101020" stroke-width="1"/>
<polyline points="672,408.8 684.4,412.5 693.8,420 697.5,427.5 705,431.2 708.8,423.8 712.5,429.4 712.5,438 710,430" fill="none" stroke="#101020" stroke-width="1"/>
<polyline points="710,312 715,317 720,324.5 725,322 731.2,309.5 732.5,297 740,292 750,294.5 755,302 760,314.5 766.2,317 770,304.5 775,297 780,292 780,282 776.2,274.5 775,262" fill="none" stroke="#101020" stroke-width="1"/>
<polyline points="705,300 710.6,311.2" fill="none" stroke="#101020" stroke-width="1"/>
<polyline points="600,232.5 607.5,238 616.9,238 624.4,241.9 611.2,251.2 603.8,260.6 600,268 590,285 596,300" fill="none" stroke="#101020" stroke-width="1"/>
<polyline points="624.4,241.9 630,234.4 637.5,225 648.8,215.6 656.2,211.9" fill="none" stroke="#101020" stroke-width="1"/>
<polyline points="697.5,200.6 695.6,217.5 699.4,234.4 701.2,243.8 705,255 716.2,266.2 712.5,277.5 710.6,285" fill="none" stroke="#101020" stroke-width="1"/>
<polyline points="721.9,194 722.8,217.5 725.6,241.9 727.5,255 720,264.4 716.2,266.2" fill="none" stroke="#101020" stroke-width="1"/>
<polyline points="786.9,208.9 782.2,214.4 775.9,223.8 768,228.4 765,233 766.6,239.4 761.9,241 766.6,245.6 768,255 772.8,259.7 774.4,267.5 776.7,273.8 775.2,280 779.8,284.7 780.6,295" fill="none" stroke="#101020" stroke-width="1"/>
<polyline points="786.9,208.9 799.4,208.9 808.8,209.7 819.7,205 830.6,202.7" fill="none" stroke="#101020" stroke-width="1"/>
<polyline points="673,285 682.5,292.5 690,285 697.5,282 706.9,285 712.5,290.6 708.8,298 701.2,300 697.5,296.2" fill="none" stroke="#101020" stroke-width="1"/>
<polyline points="358,349.5 368,342 380.5,329.5 393,322 400.5,327 408,342 409.2,357" fill="none" stroke="#101020" stroke-width="1"/>
<polyline points="435,460 450,456.2 460,461.2 472.5,457.5 480,456.2 475,470 467.5,487.5 465,491.2" fill="none" stroke="#101020" stroke-width="1"/>
<polyline points="435,460 436.2,470 442.5,475 443.8,495" fill="none" stroke="#101020" stroke-width="1"/>
<polyline points="472.5,475 487.5,470 502.5,475 510,455 515,447.5 527.5,440 526.2,430" fill="none" stroke="#101020" stroke-width="1"/>
<polyline points="515,490 527.5,482.5 530,467.5 547.5,457.5 558.6,446 568.4,441.3 574.2,447 587.9,443 605.5,437.4 615,428.6 625,421.8 629,420.8" fill="none" stroke="#101020" stroke-width="1"/>
<polyline points="515,490 515,502.5 510,515 495,517.5 485,522.5" fill="none" stroke="#101020" stroke-width="1"/>
<polyline points="515,502.5 532.5,502.5 545,497.5 555,487.5 565,492.5 580,492.5 597.5,501.2" fill="none" stroke="#101020" stroke-width="1"/>
<polyline points="660,430 655,440 640,450 630,460 623.8,470 627.5,482.5 625,490 610,497.5 597.5,501.2 585,492.5 577.5,491.2 560,493.8" fill="none" stroke="#101020" stroke-width="1"/>
<polyline points="597.5,501.2 610,500 607.5,515 600,525 610,530 622.5,532.5 626.2,537.5" fill="none" stroke="#101020" stroke-width="1"/>
<polyline points="720,430 720,447.5 715,455 702.5,465 696.2,485 695,497.5" fill="none" stroke="#101020" stroke-width="1"/>
<polyline points="710,430 708.8,442.5 712.5,450 720,447.5" fill="none" stroke="#101020" stroke-width="1"/>
<polyline points="712,178 705,185.6 697,192 691.9,198.8" fill="none" stroke="#0000e0" stroke-width="4.5" stroke-linejoin="round"/>
<polyline points="691.9,198.8 691,213.8 690,228.8 686.2,234.4" fill="none" stroke="#0000e0" stroke-width="2.6" stroke-linejoin="round"/>
<polyline points="686.2,234.4 678.8,236.2 671.2,240 663.8,245.6 660,253" fill="none" stroke="#0000e0" stroke-width="2" stroke-linejoin="round"/>
<polyline points="691.9,198.8 688,195 682.5,193 675,196.9 661.9,210 654.4,212.8" fill="none" stroke="#0000e0" stroke-width="1.6" stroke-linejoin="round"/>
<polyline points="727.5,241.9 720,262.5 716.2,277.5 710.6,290.6 705,296.2 697.5,297" fill="none" stroke="#0000e0" stroke-width="1.8" stroke-linejoin="round"/>
<rect x="512.8" y="141" width="4" height="4" fill="#68c868" stroke="#103810" stroke-width="1"/>
<rect x="520.8" y="144" width="4" height="4" fill="#68c868" stroke="#103810" stroke-width="1"/>
<rect x="503.8" y="156" width="4" height="4" fill="#68c868" stroke="#103810" stroke-width="1"/>
<rect x="510.2" y="157.2" width="4" height="4" fill="#68c868" stroke="#103810" stroke-width="1"/>
<rect x="512" y="155" width="4" height="4" fill="#68c868" stroke="#103810" stroke-width="1"/>
<rect x="528.8" y="164.5" width="4" height="4" fill="#68c868" stroke="#103810" stroke-width="1"/>
<rect x="550.8" y="141.5" width="4" height="4" fill="#68c868" stroke="#103810" stroke-width="1"/>
<rect x="557" y="153" width="4" height="4" fill="#68c868" stroke="#103810" stroke-width="1"/>
<rect x="569.5" y="163" width="4" height="4" fill="#68c868" stroke="#103810" stroke-width="1"/>
<rect x="595.8" y="163.5" width="4" height="4" fill="#68c868" stroke="#103810" stroke-width="1"/>
<rect x="623.2" y="176.8" width="4" height="4" fill="#68c868" stroke="#103810" stroke-width="1"/>
<rect x="622" y="184.8" width="4" height="4" fill="#68c868" stroke="#103810" stroke-width="1"/>
<rect x="645.8" y="186.8" width="4" height="4" fill="#68c868" stroke="#103810" stroke-width="1"/>
<rect x="638.8" y="206.8" width="4" height="4" fill="#68c868" stroke="#103810" stroke-width="1"/>
<rect x="557" y="193.5" width="4" height="4" fill="#68c868" stroke="#103810" stroke-width="1"/>
<rect x="496.5" y="196.8" width="4" height="4" fill="#68c868" stroke="#103810" stroke-width="1"/>
<rect x="482.8" y="214.8" width="4" height="4" fill="#68c868" stroke="#103810" stroke-width="1"/>
<rect x="468.8" y="244" width="4" height="4" fill="#68c868" stroke="#103810" stroke-width="1"/>
<rect x="533.8" y="234.8" width="4" height="4" fill="#68c868" stroke="#103810" stroke-width="1"/>
<rect x="548.8" y="234.8" width="4" height="4" fill="#68c868" stroke="#103810" stroke-width="1"/>
<rect x="540.8" y="241.8" width="4" height="4" fill="#68c868" stroke="#103810" stroke-width="1"/>
<rect x="529.5" y="244.8" width="4" height="4" fill="#68c868" stroke="#103810" stroke-width="1"/>
<rect x="536.8" y="246.8" width="4" height="4" fill="#68c868" stroke="#103810" stroke-width="1"/>
<rect x="504" y="241.8" width="4" height="4" fill="#68c868" stroke="#103810" stroke-width="1"/>
<rect x="568.8" y="243.8" width="4" height="4" fill="#68c868" stroke="#103810" stroke-width="1"/>
<rect x="571.5" y="252.8" width="4" height="4" fill="#68c868" stroke="#103810" stroke-width="1"/>
<rect x="589.5" y="249.8" width="4" height="4" fill="#68c868" stroke="#103810" stroke-width="1"/>
<rect x="588.8" y="256" width="4" height="4" fill="#68c868" stroke="#103810" stroke-width="1"/>
<rect x="486.5" y="252.8" width="4" height="4" fill="#68c868" stroke="#103810" stroke-width="1"/>
<rect x="494.5" y="252.8" width="4" height="4" fill="#68c868" stroke="#103810" stroke-width="1"/>
<rect x="500.8" y="256.5" width="4" height="4" fill="#68c868" stroke="#103810" stroke-width="1"/>
<rect x="587" y="205.5" width="4" height="4" fill="#68c868" stroke="#103810" stroke-width="1"/>
<rect x="592.8" y="201.8" width="4" height="4" fill="#68c868" stroke="#103810" stroke-width="1"/>
<rect x="609.5" y="236" width="4" height="4" fill="#68c868" stroke="#103810" stroke-width="1"/>
<rect x="589" y="231" width="4" height="4" fill="#68c868" stroke="#103810" stroke-width="1"/>
<rect x="631.5" y="246.2" width="4" height="4" fill="#68c868" stroke="#103810" stroke-width="1"/>
<rect x="482.8" y="270" width="4" height="4" fill="#68c868" stroke="#103810" stroke-width="1"/>
<rect x="530" y="297.5" width="4" height="4" fill="#68c868" stroke="#103810" stroke-width="1"/>
<rect x="532.8" y="306.8" width="4" height="4" fill="#68c868" stroke="#103810" stroke-width="1"/>
<rect x="530.8" y="312.5" width="4" height="4" fill="#68c868" stroke="#103810" stroke-width="1"/>
<rect x="527" y="320" width="4" height="4" fill="#68c868" stroke="#103810" stroke-width="1"/>
<rect x="504" y="320" width="4" height="4" fill="#68c868" stroke="#103810" stroke-width="1"/>
<rect x="502.8" y="328" width="4" height="4" fill="#68c868" stroke="#103810" stroke-width="1"/>
<rect x="519" y="336.8" width="4" height="4" fill="#68c868" stroke="#103810" stroke-width="1"/>
<rect x="572.5" y="277" width="4" height="4" fill="#68c868" stroke="#103810" stroke-width="1"/>
<rect x="585.8" y="261.2" width="4" height="4" fill="#68c868" stroke="#103810" stroke-width="1"/>
<rect x="594.5" y="265.5" width="4" height="4" fill="#68c868" stroke="#103810" stroke-width="1"/>
<rect x="594" y="272.5" width="4" height="4" fill="#68c868" stroke="#103810" stroke-width="1"/>
<rect x="602.8" y="277.5" width="4" height="4" fill="#68c868" stroke="#103810" stroke-width="1"/>
<rect x="587" y="288.8" width="4" height="4" fill="#68c868" stroke="#103810" stroke-width="1"/>
<rect x="586.2" y="292" width="4" height="4" fill="#68c868" stroke="#103810" stroke-width="1"/>
<rect x="592" y="292.5" width="4" height="4" fill="#68c868" stroke="#103810" stroke-width="1"/>
<rect x="595" y="286.8" width="4" height="4" fill="#68c868" stroke="#103810" stroke-width="1"/>
<rect x="598.5" y="298" width="4" height="4" fill="#68c868" stroke="#103810" stroke-width="1"/>
<rect x="626.2" y="265.5" width="4" height="4" fill="#68c868" stroke="#103810" stroke-width="1"/>
<rect x="626.5" y="272" width="4" height="4" fill="#68c868" stroke="#103810" stroke-width="1"/>
<rect x="634.5" y="277.5" width="4" height="4" fill="#68c868" stroke="#103810" stroke-width="1"/>
<rect x="631" y="282.5" width="4" height="4" fill="#68c868" stroke="#103810" stroke-width="1"/>
<rect x="640" y="282.5" width="4" height="4" fill="#68c868" stroke="#103810" stroke-width="1"/>
<rect x="645" y="275.5" width="4" height="4" fill="#68c868" stroke="#103810" stroke-width="1"/>
<rect x="661.2" y="264.2" width="4" height="4" fill="#68c868" stroke="#103810" stroke-width="1"/>
<rect x="661.2" y="267.5" width="4" height="4" fill="#68c868" stroke="#103810" stroke-width="1"/>
<rect x="672" y="270.5" width="4" height="4" fill="#68c868" stroke="#103810" stroke-width="1"/>
<rect x="653.8" y="287.5" width="4" height="4" fill="#68c868" stroke="#103810" stroke-width="1"/>
<rect x="647.8" y="299.2" width="4" height="4" fill="#68c868" stroke="#103810" stroke-width="1"/>
<rect x="658.2" y="299.5" width="4" height="4" fill="#68c868" stroke="#103810" stroke-width="1"/>
<rect x="716" y="263.8" width="4" height="4" fill="#68c868" stroke="#103810" stroke-width="1"/>
<rect x="708" y="305" width="4" height="4" fill="#68c868" stroke="#103810" stroke-width="1"/>
<rect x="723.8" y="310" width="4" height="4" fill="#68c868" stroke="#103810" stroke-width="1"/>
<rect x="728" y="310" width="4" height="4" fill="#68c868" stroke="#103810" stroke-width="1"/>
<rect x="715" y="313.2" width="4" height="4" fill="#68c868" stroke="#103810" stroke-width="1"/>
<rect x="715.5" y="324.2" width="4" height="4" fill="#68c868" stroke="#103810" stroke-width="1"/>
<rect x="718.8" y="325.5" width="4" height="4" fill="#68c868" stroke="#103810" stroke-width="1"/>
<rect x="719.2" y="335.8" width="4" height="4" fill="#68c868" stroke="#103810" stroke-width="1"/>
<rect x="728" y="327.5" width="4" height="4" fill="#68c868" stroke="#103810" stroke-width="1"/>
<rect x="732.5" y="328.8" width="4" height="4" fill="#68c868" stroke="#103810" stroke-width="1"/>
<rect x="737.2" y="320.8" width="4" height="4" fill="#68c868" stroke="#103810" stroke-width="1"/>
<rect x="737.2" y="325.8" width="4" height="4" fill="#68c868" stroke="#103810" stroke-width="1"/>
<rect x="743" y="317" width="4" height="4" fill="#68c868" stroke="#103810" stroke-width="1"/>
<rect x="750" y="320.8" width="4" height="4" fill="#68c868" stroke="#103810" stroke-width="1"/>
<rect x="760" y="324.2" width="4" height="4" fill="#68c868" stroke="#103810" stroke-width="1"/>
<rect x="766.8" y="320.8" width="4" height="4" fill="#68c868" stroke="#103810" stroke-width="1"/>
<rect x="771" y="321.8" width="4" height="4" fill="#68c868" stroke="#103810" stroke-width="1"/>
<rect x="775.5" y="321.8" width="4" height="4" fill="#68c868" stroke="#103810" stroke-width="1"/>
<rect x="755" y="332.8" width="4" height="4" fill="#68c868" stroke="#103810" stroke-width="1"/>
<rect x="753.8" y="337.8" width="4" height="4" fill="#68c868" stroke="#103810" stroke-width="1"/>
<rect x="761.8" y="336.8" width="4" height="4" fill="#68c868" stroke="#103810" stroke-width="1"/>
<rect x="781.2" y="335" width="4" height="4" fill="#68c868" stroke="#103810" stroke-width="1"/>
<rect x="785.5" y="333.8" width="4" height="4" fill="#68c868" stroke="#103810" stroke-width="1"/>
<rect x="788" y="328.8" width="4" height="4" fill="#68c868" stroke="#103810" stroke-width="1"/>
<rect x="803.8" y="349.8" width="4" height="4" fill="#68c868" stroke="#103810" stroke-width="1"/>
<rect x="830" y="308.8" width="4" height="4" fill="#68c868" stroke="#103810" stroke-width="1"/>
<rect x="701" y="381.8" width="4" height="4" fill="#68c868" stroke="#103810" stroke-width="1"/>
<rect x="701" y="390.8" width="4" height="4" fill="#68c868" stroke="#103810" stroke-width="1"/>
<rect x="698" y="410" width="4" height="4" fill="#68c868" stroke="#103810" stroke-width="1"/>
<rect x="702.2" y="408.2" width="4" height="4" fill="#68c868" stroke="#103810" stroke-width="1"/>
<rect x="703.8" y="415" width="4" height="4" fill="#68c868" stroke="#103810" stroke-width="1"/>
<rect x="738" y="440.8" width="4" height="4" fill="#68c868" stroke="#103810" stroke-width="1"/>
<rect x="741" y="332" width="4" height="4" fill="#68c868" stroke="#103810" stroke-width="1"/>
<rect x="742.8" y="449.8" width="4" height="4" fill="#68c868" stroke="#103810" stroke-width="1"/>
<rect x="735.8" y="453.8" width="4" height="4" fill="#68c868" stroke="#103810" stroke-width="1"/>
<rect x="744.8" y="455.8" width="4" height="4" fill="#68c868" stroke="#103810" stroke-width="1"/>
<rect x="721.8" y="458" width="4" height="4" fill="#68c868" stroke="#103810" stroke-width="1"/>
<rect x="721.8" y="460.2" width="4" height="4" fill="#68c868" stroke="#103810" stroke-width="1"/>
<rect x="719.8" y="465" width="4" height="4" fill="#68c868" stroke="#103810" stroke-width="1"/>
<rect x="723.8" y="466" width="4" height="4" fill="#68c868" stroke="#103810" stroke-width="1"/>
<rect x="710.8" y="473" width="4" height="4" fill="#68c868" stroke="#103810" stroke-width="1"/>
<rect x="725.8" y="473.8" width="4" height="4" fill="#68c868" stroke="#103810" stroke-width="1"/>
<rect x="709.8" y="485.8" width="4" height="4" fill="#68c868" stroke="#103810" stroke-width="1"/>
<rect x="714.6" y="194.1" width="4" height="4" fill="#68c868" stroke="#103810" stroke-width="1"/>
<rect x="728.7" y="198.8" width="4" height="4" fill="#68c868" stroke="#103810" stroke-width="1"/>
<rect x="703" y="210.6" width="4" height="4" fill="#68c868" stroke="#103810" stroke-width="1"/>
<rect x="727.8" y="208.6" width="4" height="4" fill="#68c868" stroke="#103810" stroke-width="1"/>
<rect x="752.7" y="200.7" width="4" height="4" fill="#68c868" stroke="#103810" stroke-width="1"/>
<rect x="757.6" y="202" width="4" height="4" fill="#68c868" stroke="#103810" stroke-width="1"/>
<rect x="768.4" y="205.4" width="4" height="4" fill="#68c868" stroke="#103810" stroke-width="1"/>
<rect x="772.6" y="206.7" width="4" height="4" fill="#68c868" stroke="#103810" stroke-width="1"/>
<rect x="778.9" y="208.6" width="4" height="4" fill="#68c868" stroke="#103810" stroke-width="1"/>
<rect x="688.6" y="242.7" width="4" height="4" fill="#68c868" stroke="#103810" stroke-width="1"/>
<rect x="690.1" y="252.8" width="4" height="4" fill="#68c868" stroke="#103810" stroke-width="1"/>
<rect x="688.9" y="255.8" width="4" height="4" fill="#68c868" stroke="#103810" stroke-width="1"/>
<rect x="703" y="218.7" width="4" height="4" fill="#68c868" stroke="#103810" stroke-width="1"/>
<rect x="705.8" y="223.9" width="4" height="4" fill="#68c868" stroke="#103810" stroke-width="1"/>
<rect x="707.7" y="233.7" width="4" height="4" fill="#68c868" stroke="#103810" stroke-width="1"/>
<rect x="726.1" y="213.6" width="4" height="4" fill="#68c868" stroke="#103810" stroke-width="1"/>
<rect x="729.2" y="212.3" width="4" height="4" fill="#68c868" stroke="#103810" stroke-width="1"/>
<rect x="724.6" y="251.1" width="4" height="4" fill="#68c868" stroke="#103810" stroke-width="1"/>
<rect x="724.9" y="254.5" width="4" height="4" fill="#68c868" stroke="#103810" stroke-width="1"/>
<rect x="750.8" y="243.6" width="4" height="4" fill="#68c868" stroke="#103810" stroke-width="1"/>
<rect x="773.7" y="222.1" width="4" height="4" fill="#68c868" stroke="#103810" stroke-width="1"/>
<rect x="766.8" y="252.1" width="4" height="4" fill="#68c868" stroke="#103810" stroke-width="1"/>
<rect x="598.9" y="301.8" width="4" height="4" fill="#68c868" stroke="#103810" stroke-width="1"/>
<rect x="519" y="146.8" width="5" height="5" fill="#8c4858" stroke="#281018" stroke-width="1"/>
<rect x="510.2" y="252.2" width="5" height="5" fill="#8c4858" stroke="#281018" stroke-width="1"/>
<rect x="678.8" y="280.2" width="5" height="5" fill="#8c4858" stroke="#281018" stroke-width="1"/>
<rect x="710" y="338.8" width="5" height="5" fill="#8c4858" stroke="#281018" stroke-width="1"/>
<rect x="735.8" y="330.8" width="5" height="5" fill="#8c4858" stroke="#281018" stroke-width="1"/>
<rect x="707.5" y="358.2" width="5" height="5" fill="#8c4858" stroke="#281018" stroke-width="1"/>
<rect x="602.5" y="528.2" width="5" height="5" fill="#8c4858" stroke="#281018" stroke-width="1"/>
<rect x="580" y="541.2" width="5" height="5" fill="#8c4858" stroke="#281018" stroke-width="1"/>
<rect x="562.5" y="579.8" width="5" height="5" fill="#8c4858" stroke="#281018" stroke-width="1"/>
<rect x="517.2" y="138" width="5" height="5" fill="#d02828" stroke="#301010" stroke-width="1"/>
<rect x="427" y="233.5" width="5" height="5" fill="#d02828" stroke="#301010" stroke-width="1"/>
<rect x="364.2" y="296.5" width="5" height="5" fill="#d02828" stroke="#301010" stroke-width="1"/>
<rect x="416.2" y="335" width="5" height="5" fill="#d02828" stroke="#301010" stroke-width="1"/>
<rect x="381.2" y="417" width="5" height="5" fill="#d02828" stroke="#301010" stroke-width="1"/>
<rect x="409.2" y="420" width="5" height="5" fill="#d02828" stroke="#301010" stroke-width="1"/>
<rect x="462.2" y="269.5" width="5" height="5" fill="#d02828" stroke="#301010" stroke-width="1"/>
<rect x="542.2" y="275" width="5" height="5" fill="#d02828" stroke="#301010" stroke-width="1"/>
<rect x="446.5" y="305.8" width="5" height="5" fill="#d02828" stroke="#301010" stroke-width="1"/>
<rect x="452.5" y="371.2" width="5" height="5" fill="#d02828" stroke="#301010" stroke-width="1"/>
<rect x="562.2" y="365.2" width="5" height="5" fill="#d02828" stroke="#301010" stroke-width="1"/>
<rect x="520.2" y="405" width="5" height="5" fill="#d02828" stroke="#301010" stroke-width="1"/>
<rect x="470.2" y="405.8" width="5" height="5" fill="#d02828" stroke="#301010" stroke-width="1"/>
<rect x="516" y="414.5" width="5" height="5" fill="#d02828" stroke="#301010" stroke-width="1"/>
<rect x="494.2" y="421.2" width="5" height="5" fill="#d02828" stroke="#301010" stroke-width="1"/>
<rect x="495.2" y="434.2" width="5" height="5" fill="#d02828" stroke="#301010" stroke-width="1"/>
<rect x="424" y="433.8" width="5" height="5" fill="#d02828" stroke="#301010" stroke-width="1"/>
<rect x="664.5" y="394.5" width="5" height="5" fill="#d02828" stroke="#301010" stroke-width="1"/>
<rect x="674" y="416.2" width="5" height="5" fill="#d02828" stroke="#301010" stroke-width="1"/>
<rect x="420.5" y="471.2" width="5" height="5" fill="#d02828" stroke="#301010" stroke-width="1"/>
<rect x="451.8" y="458.2" width="5" height="5" fill="#d02828" stroke="#301010" stroke-width="1"/>
<rect x="480" y="466.2" width="5" height="5" fill="#d02828" stroke="#301010" stroke-width="1"/>
<rect x="504.5" y="487.2" width="5" height="5" fill="#d02828" stroke="#301010" stroke-width="1"/>
<rect x="544.2" y="465.2" width="5" height="5" fill="#d02828" stroke="#301010" stroke-width="1"/>
<rect x="539.5" y="535.5" width="5" height="5" fill="#d02828" stroke="#301010" stroke-width="1"/>
<rect x="579.5" y="541.2" width="5" height="5" fill="#d02828" stroke="#301010" stroke-width="1"/>
<rect x="562.5" y="579.8" width="5" height="5" fill="#d02828" stroke="#301010" stroke-width="1"/>
<rect x="714.1" y="188.2" width="5" height="5" fill="#d02828" stroke="#301010" stroke-width="1"/>
<rect x="679.4" y="280.2" width="5" height="5" fill="#d02828" stroke="#301010" stroke-width="1"/>
<rect x="717.5" y="276.9" width="5" height="5" fill="#d02828" stroke="#301010" stroke-width="1"/>
<rect x="586.5" y="233.5" width="5" height="5" fill="#141478" stroke="#000020" stroke-width="1"/>
<rect x="371.2" y="235.5" width="5" height="5" fill="#141478" stroke="#000020" stroke-width="1"/>
<rect x="396.5" y="251.2" width="5" height="5" fill="#141478" stroke="#000020" stroke-width="1"/>
<rect x="389.2" y="343.2" width="5" height="5" fill="#141478" stroke="#000020" stroke-width="1"/>
<rect x="542.2" y="338.2" width="5" height="5" fill="#141478" stroke="#000020" stroke-width="1"/>
<rect x="639.5" y="333.2" width="5" height="5" fill="#141478" stroke="#000020" stroke-width="1"/>
<rect x="669" y="352.2" width="5" height="5" fill="#141478" stroke="#000020" stroke-width="1"/>
<rect x="608.2" y="365.5" width="5" height="5" fill="#141478" stroke="#000020" stroke-width="1"/>
<rect x="535.2" y="399.5" width="5" height="5" fill="#141478" stroke="#000020" stroke-width="1"/>
<rect x="631" y="433.8" width="5" height="5" fill="#141478" stroke="#000020" stroke-width="1"/>
<rect x="692" y="294.8" width="5" height="5" fill="#141478" stroke="#000020" stroke-width="1"/>
<rect x="718.8" y="277" width="5" height="5" fill="#141478" stroke="#000020" stroke-width="1"/>
<rect x="694.5" y="348.8" width="5" height="5" fill="#141478" stroke="#000020" stroke-width="1"/>
<rect x="703.8" y="373.2" width="5" height="5" fill="#141478" stroke="#000020" stroke-width="1"/>
<rect x="687.5" y="383.2" width="5" height="5" fill="#141478" stroke="#000020" stroke-width="1"/>
<rect x="703.8" y="356.5" width="5" height="5" fill="#141478" stroke="#000020" stroke-width="1"/>
<rect x="444.2" y="449.2" width="5" height="5" fill="#141478" stroke="#000020" stroke-width="1"/>
<rect x="548.8" y="527.2" width="5" height="5" fill="#141478" stroke="#000020" stroke-width="1"/>
<rect x="584.5" y="506.8" width="5" height="5" fill="#141478" stroke="#000020" stroke-width="1"/>
<rect x="596.2" y="475" width="5" height="5" fill="#141478" stroke="#000020" stroke-width="1"/>
<rect x="679.2" y="472.5" width="5" height="5" fill="#141478" stroke="#000020" stroke-width="1"/>
<rect x="625.5" y="506.2" width="5" height="5" fill="#141478" stroke="#000020" stroke-width="1"/>
<rect x="633.5" y="276.9" width="5" height="5" fill="#141478" stroke="#000020" stroke-width="1"/>
<circle cx="552.8" cy="141.8" r="2.7" fill="#10107c"/>
<circle cx="555.2" cy="151.2" r="2.7" fill="#10107c"/>
<circle cx="554" cy="161" r="2.7" fill="#10107c"/>
<circle cx="524" cy="190.2" r="2.7" fill="#10107c"/>
<circle cx="477.2" cy="200.2" r="2.7" fill="#10107c"/>
<circle cx="503.5" cy="213.2" r="2.7" fill="#10107c"/>
<circle cx="500.2" cy="222.2" r="2.7" fill="#10107c"/>
<circle cx="480.2" cy="225.2" r="2.7" fill="#10107c"/>
<circle cx="484" cy="217.5" r="2.7" fill="#10107c"/>
<circle cx="512" cy="230" r="2.7" fill="#10107c"/>
<circle cx="434" cy="230" r="2.7" fill="#10107c"/>
<circle cx="448.2" cy="243.8" r="2.7" fill="#10107c"/>
<circle cx="558.2" cy="215.2" r="2.7" fill="#10107c"/>
<circle cx="567.2" cy="222.2" r="2.7" fill="#10107c"/>
<circle cx="558.2" cy="244" r="2.7" fill="#10107c"/>
<circle cx="589" cy="236" r="2.7" fill="#10107c"/>
<circle cx="617.2" cy="238" r="2.7" fill="#10107c"/>
<circle cx="640.2" cy="194.2" r="2.7" fill="#10107c"/>
<circle cx="654" cy="212.2" r="2.7" fill="#10107c"/>
<circle cx="633.5" cy="248.2" r="2.7" fill="#10107c"/>
<circle cx="673.2" cy="245" r="2.7" fill="#10107c"/>
<circle cx="514.8" cy="256" r="2.7" fill="#10107c"/>
<circle cx="420.5" cy="222.2" r="2.7" fill="#10107c"/>
<circle cx="407.5" cy="242.2" r="2.7" fill="#10107c"/>
<circle cx="398.2" cy="245.2" r="2.7" fill="#10107c"/>
<circle cx="355" cy="245" r="2.7" fill="#10107c"/>
<circle cx="342.2" cy="257" r="2.7" fill="#10107c"/>
<circle cx="308.5" cy="252.2" r="2.7" fill="#10107c"/>
<circle cx="377.5" cy="262" r="2.7" fill="#10107c"/>
<circle cx="372.2" cy="268.2" r="2.7" fill="#10107c"/>
<circle cx="386.2" cy="267" r="2.7" fill="#10107c"/>
<circle cx="381.2" cy="274" r="2.7" fill="#10107c"/>
<circle cx="360" cy="279" r="2.7" fill="#10107c"/>
<circle cx="385" cy="307.2" r="2.7" fill="#10107c"/>
<circle cx="382.2" cy="322.2" r="2.7" fill="#10107c"/>
<circle cx="357.2" cy="327.2" r="2.7" fill="#10107c"/>
<circle cx="386.2" cy="336.2" r="2.7" fill="#10107c"/>
<circle cx="383" cy="397.2" r="2.7" fill="#10107c"/>
<circle cx="399.2" cy="408.2" r="2.7" fill="#10107c"/>
<circle cx="411.2" cy="407" r="2.7" fill="#10107c"/>
<circle cx="420.5" cy="379" r="2.7" fill="#10107c"/>
<circle cx="422.5" cy="398.2" r="2.7" fill="#10107c"/>
<circle cx="389.2" cy="423.2" r="2.7" fill="#10107c"/>
<circle cx="400.5" cy="425.8" r="2.7" fill="#10107c"/>
<circle cx="415.5" cy="425.2" r="2.7" fill="#10107c"/>
<circle cx="365.5" cy="429" r="2.7" fill="#10107c"/>
<circle cx="376.8" cy="436.2" r="2.7" fill="#10107c"/>
<circle cx="418" cy="433.2" r="2.7" fill="#10107c"/>
<circle cx="422.5" cy="331.2" r="2.7" fill="#10107c"/>
<circle cx="417.5" cy="263.2" r="2.7" fill="#10107c"/>
<circle cx="477.8" cy="263.2" r="2.7" fill="#10107c"/>
<circle cx="464" cy="272" r="2.7" fill="#10107c"/>
<circle cx="481" cy="275" r="2.7" fill="#10107c"/>
<circle cx="510.2" cy="277.5" r="2.7" fill="#10107c"/>
<circle cx="520.2" cy="266.2" r="2.7" fill="#10107c"/>
<circle cx="536.5" cy="275" r="2.7" fill="#10107c"/>
<circle cx="547.2" cy="279" r="2.7" fill="#10107c"/>
<circle cx="565.2" cy="283.2" r="2.7" fill="#10107c"/>
<circle cx="583.5" cy="289" r="2.7" fill="#10107c"/>
<circle cx="460.8" cy="287" r="2.7" fill="#10107c"/>
<circle cx="453.5" cy="304.5" r="2.7" fill="#10107c"/>
<circle cx="466.5" cy="306.5" r="2.7" fill="#10107c"/>
<circle cx="449" cy="309.5" r="2.7" fill="#10107c"/>
<circle cx="442.2" cy="315.2" r="2.7" fill="#10107c"/>
<circle cx="479.5" cy="317.5" r="2.7" fill="#10107c"/>
<circle cx="456" cy="322" r="2.7" fill="#10107c"/>
<circle cx="459.2" cy="327.5" r="2.7" fill="#10107c"/>
<circle cx="536" cy="304.5" r="2.7" fill="#10107c"/>
<circle cx="529" cy="322" r="2.7" fill="#10107c"/>
<circle cx="556.5" cy="314.2" r="2.7" fill="#10107c"/>
<circle cx="584.5" cy="316.2" r="2.7" fill="#10107c"/>
<circle cx="617.2" cy="296.2" r="2.7" fill="#10107c"/>
<circle cx="617.2" cy="315.2" r="2.7" fill="#10107c"/>
<circle cx="634.8" cy="297.5" r="2.7" fill="#10107c"/>
<circle cx="600.5" cy="306.2" r="2.7" fill="#10107c"/>
<circle cx="655.2" cy="286.2" r="2.7" fill="#10107c"/>
<circle cx="677.8" cy="279.5" r="2.7" fill="#10107c"/>
<circle cx="665.2" cy="328.2" r="2.7" fill="#10107c"/>
<circle cx="631.5" cy="332.5" r="2.7" fill="#10107c"/>
<circle cx="678.5" cy="336.2" r="2.7" fill="#10107c"/>
<circle cx="628.2" cy="352" r="2.7" fill="#10107c"/>
<circle cx="658.2" cy="365.2" r="2.7" fill="#10107c"/>
<circle cx="460.2" cy="349.2" r="2.7" fill="#10107c"/>
<circle cx="430.2" cy="354.5" r="2.7" fill="#10107c"/>
<circle cx="435.2" cy="357" r="2.7" fill="#10107c"/>
<circle cx="425.2" cy="365.8" r="2.7" fill="#10107c"/>
<circle cx="440.8" cy="374.2" r="2.7" fill="#10107c"/>
<circle cx="460.2" cy="372" r="2.7" fill="#10107c"/>
<circle cx="545.8" cy="367.2" r="2.7" fill="#10107c"/>
<circle cx="583.5" cy="372.2" r="2.7" fill="#10107c"/>
<circle cx="514.5" cy="379.2" r="2.7" fill="#10107c"/>
<circle cx="535.2" cy="385.2" r="2.7" fill="#10107c"/>
<circle cx="597.2" cy="387" r="2.7" fill="#10107c"/>
<circle cx="648.2" cy="385.2" r="2.7" fill="#10107c"/>
<circle cx="446" cy="384.2" r="2.7" fill="#10107c"/>
<circle cx="461.5" cy="391.2" r="2.7" fill="#10107c"/>
<circle cx="427" cy="392.2" r="2.7" fill="#10107c"/>
<circle cx="443.2" cy="398.2" r="2.7" fill="#10107c"/>
<circle cx="469" cy="401.2" r="2.7" fill="#10107c"/>
<circle cx="473.2" cy="411.2" r="2.7" fill="#10107c"/>
<circle cx="456.5" cy="410.2" r="2.7" fill="#10107c"/>
<circle cx="454.5" cy="419.2" r="2.7" fill="#10107c"/>
<circle cx="485.2" cy="419.2" r="2.7" fill="#10107c"/>
<circle cx="500.2" cy="424.5" r="2.7" fill="#10107c"/>
<circle cx="488.5" cy="437.2" r="2.7" fill="#10107c"/>
<circle cx="541.5" cy="418.2" r="2.7" fill="#10107c"/>
<circle cx="542.2" cy="428.2" r="2.7" fill="#10107c"/>
<circle cx="610.2" cy="416.2" r="2.7" fill="#10107c"/>
<circle cx="624" cy="408.2" r="2.7" fill="#10107c"/>
<circle cx="652.2" cy="410.2" r="2.7" fill="#10107c"/>
<circle cx="664.2" cy="404.5" r="2.7" fill="#10107c"/>
<circle cx="667.8" cy="393.2" r="2.7" fill="#10107c"/>
<circle cx="597.2" cy="431.2" r="2.7" fill="#10107c"/>
<circle cx="608.2" cy="437" r="2.7" fill="#10107c"/>
<circle cx="647.2" cy="431.2" r="2.7" fill="#10107c"/>
<circle cx="634" cy="437.8" r="2.7" fill="#10107c"/>
<circle cx="671.5" cy="440.8" r="2.7" fill="#10107c"/>
<circle cx="427" cy="439.5" r="2.7" fill="#10107c"/>
<circle cx="857.5" cy="266.5" r="2.7" fill="#10107c"/>
<circle cx="710.5" cy="286.2" r="2.7" fill="#10107c"/>
<circle cx="692.5" cy="327.2" r="2.7" fill="#10107c"/>
<circle cx="714.2" cy="342.5" r="2.7" fill="#10107c"/>
<circle cx="796.8" cy="327.2" r="2.7" fill="#10107c"/>
<circle cx="747" cy="332.2" r="2.7" fill="#10107c"/>
<circle cx="762.5" cy="326.2" r="2.7" fill="#10107c"/>
<circle cx="778.8" cy="324.5" r="2.7" fill="#10107c"/>
<circle cx="745.5" cy="374.2" r="2.7" fill="#10107c"/>
<circle cx="749.5" cy="385.2" r="2.7" fill="#10107c"/>
<circle cx="780.5" cy="394" r="2.7" fill="#10107c"/>
<circle cx="800.8" cy="375.2" r="2.7" fill="#10107c"/>
<circle cx="800.8" cy="379.8" r="2.7" fill="#10107c"/>
<circle cx="800.8" cy="384.8" r="2.7" fill="#10107c"/>
<circle cx="822.5" cy="366.2" r="2.7" fill="#10107c"/>
<circle cx="831.2" cy="371.2" r="2.7" fill="#10107c"/>
<circle cx="823.2" cy="409.2" r="2.7" fill="#10107c"/>
<circle cx="830.2" cy="424.2" r="2.7" fill="#10107c"/>
<circle cx="757.5" cy="414.2" r="2.7" fill="#10107c"/>
<circle cx="779.5" cy="415.2" r="2.7" fill="#10107c"/>
<circle cx="721.8" cy="412.2" r="2.7" fill="#10107c"/>
<circle cx="723.2" cy="423.2" r="2.7" fill="#10107c"/>
<circle cx="686.2" cy="404.2" r="2.7" fill="#10107c"/>
<circle cx="690" cy="420.2" r="2.7" fill="#10107c"/>
<circle cx="710" cy="407" r="2.7" fill="#10107c"/>
<circle cx="722" cy="444" r="2.7" fill="#10107c"/>
<circle cx="464.2" cy="456.2" r="2.7" fill="#10107c"/>
<circle cx="483.2" cy="457.2" r="2.7" fill="#10107c"/>
<circle cx="489.5" cy="455.2" r="2.7" fill="#10107c"/>
<circle cx="447" cy="452.5" r="2.7" fill="#10107c"/>
<circle cx="456.2" cy="464.2" r="2.7" fill="#10107c"/>
<circle cx="445.5" cy="470.2" r="2.7" fill="#10107c"/>
<circle cx="436.2" cy="472.2" r="2.7" fill="#10107c"/>
<circle cx="452.5" cy="475.2" r="2.7" fill="#10107c"/>
<circle cx="443.2" cy="479.2" r="2.7" fill="#10107c"/>
<circle cx="421.2" cy="476.2" r="2.7" fill="#10107c"/>
<circle cx="424.5" cy="485.2" r="2.7" fill="#10107c"/>
<circle cx="426.2" cy="495.5" r="2.7" fill="#10107c"/>
<circle cx="504.2" cy="486.5" r="2.7" fill="#10107c"/>
<circle cx="515.8" cy="467.5" r="2.7" fill="#10107c"/>
<circle cx="540.8" cy="452.2" r="2.7" fill="#10107c"/>
<circle cx="552.8" cy="467.5" r="2.7" fill="#10107c"/>
<circle cx="593.2" cy="450.2" r="2.7" fill="#10107c"/>
<circle cx="538.2" cy="503.2" r="2.7" fill="#10107c"/>
<circle cx="519.2" cy="517.2" r="2.7" fill="#10107c"/>
<circle cx="539.2" cy="525.2" r="2.7" fill="#10107c"/>
<circle cx="538.2" cy="533.2" r="2.7" fill="#10107c"/>
<circle cx="489.2" cy="528.2" r="2.7" fill="#10107c"/>
<circle cx="550.8" cy="530" r="2.7" fill="#10107c"/>
<circle cx="587.2" cy="509.8" r="2.7" fill="#10107c"/>
<circle cx="529.2" cy="556.2" r="2.7" fill="#10107c"/>
<circle cx="561.2" cy="550.2" r="2.7" fill="#10107c"/>
<circle cx="576.2" cy="547.2" r="2.7" fill="#10107c"/>
<circle cx="583.8" cy="543.8" r="2.7" fill="#10107c"/>
<circle cx="541.2" cy="575.2" r="2.7" fill="#10107c"/>
<circle cx="568" cy="582.2" r="2.7" fill="#10107c"/>
<circle cx="571.2" cy="590.2" r="2.7" fill="#10107c"/>
<circle cx="574.2" cy="601.8" r="2.7" fill="#10107c"/>
<circle cx="595" cy="573.2" r="2.7" fill="#10107c"/>
<circle cx="610" cy="451.2" r="2.7" fill="#10107c"/>
<circle cx="655.2" cy="454.2" r="2.7" fill="#10107c"/>
<circle cx="704.2" cy="456" r="2.7" fill="#10107c"/>
<circle cx="690.2" cy="461.2" r="2.7" fill="#10107c"/>
<circle cx="603.2" cy="467.2" r="2.7" fill="#10107c"/>
<circle cx="612" cy="476" r="2.7" fill="#10107c"/>
<circle cx="653.2" cy="473.2" r="2.7" fill="#10107c"/>
<circle cx="627.2" cy="483.2" r="2.7" fill="#10107c"/>
<circle cx="647.2" cy="486.2" r="2.7" fill="#10107c"/>
<circle cx="616.2" cy="489.2" r="2.7" fill="#10107c"/>
<circle cx="696.2" cy="488.2" r="2.7" fill="#10107c"/>
<circle cx="683.2" cy="475.2" r="2.7" fill="#10107c"/>
<circle cx="628.2" cy="510.2" r="2.7" fill="#10107c"/>
<circle cx="601.2" cy="540.2" r="2.7" fill="#10107c"/>
<circle cx="699.4" cy="225" r="2.7" fill="#10107c"/>
<circle cx="707.2" cy="230.1" r="2.7" fill="#10107c"/>
<circle cx="696.2" cy="256.3" r="2.7" fill="#10107c"/>
<circle cx="723.8" cy="279.4" r="2.7" fill="#10107c"/>
<circle cx="702.8" cy="297.6" r="2.7" fill="#10107c"/>
<circle cx="708.4" cy="297.6" r="2.7" fill="#10107c"/>
<circle cx="848" cy="249.6" r="2.7" fill="#10107c"/>
</g>
</svg>
<div class="abs" style="left:833px;top:0;width:17px;height:533px;background:linear-gradient(to right,#d4e8f6,#eef4fa 50%,#f8fafc);"></div>
<div class="abs" style="left:0;top:533px;width:833px;height:17px;background:linear-gradient(to bottom,#d4e8f6,#eef4fa 50%,#f8fafc);"></div>
<div class="sbb" style="left:834px;top:0px;height:17px;"><svg width="15" height="16"><path d="M4 10 L7.5 6.5 L11 10" fill="none" stroke="#4c5868" stroke-width="2"/></svg></div>
<div class="sbb" style="left:834px;top:516px;height:17px;"><svg width="15" height="16"><path d="M4 6.5 L7.5 10 L11 6.5" fill="none" stroke="#4c5868" stroke-width="2"/></svg></div>
<div class="sbb" style="left:834px;top:239px;height:97px;background:linear-gradient(to right,#e8eef6,#c4d2e4);"><svg width="15" height="97"><path d="M4.5 44.5 H10.5 M4.5 46.5 H10.5 M4.5 48.5 H10.5 M4.5 50.5 H10.5" stroke="#7888a0" stroke-width="1"/></svg></div>
<div class="sbb" style="left:1px;top:534px;"><svg width="15" height="16"><path d="M9.5 4 L6 7.5 L9.5 11" fill="none" stroke="#4c5868" stroke-width="2"/></svg></div>
<div class="sbb" style="left:816px;top:534px;"><svg width="15" height="16"><path d="M6 4 L9.5 7.5 L6 11" fill="none" stroke="#4c5868" stroke-width="2"/></svg></div>
<div class="sbb" style="left:131px;top:534px;width:89px;background:linear-gradient(to bottom,#e8eef6,#c4d2e4);"><svg width="89" height="16"><path d="M41.5 4.5 V10.5 M43.5 4.5 V10.5 M45.5 4.5 V10.5 M47.5 4.5 V10.5" stroke="#7888a0" stroke-width="1"/></svg></div>
</div>
<!-- BOTTOM -->
<div id="bottom">
<div class="abs" style="left:4px;top:637px;width:160px;height:72px;border:1px solid #a8a8a8;box-shadow:inset 1px 1px 0 #fff, 1px 1px 0 #fff;box-sizing:border-box;"></div>
<div class="rad" style="left:20.5px;top:653.5px"></div>
<div class="abs lb" style="left:38px;top:652.5px">Feet</div>
<div class="rad" style="left:84.5px;top:653.5px"><div style="position:absolute;left:3px;top:3px;width:3px;height:3px;border-radius:50%;background:#000"></div></div>
<div class="abs lb" style="left:102px;top:652.5px">Kilometer</div>
<div class="rad" style="left:20.5px;top:677.5px"></div>
<div class="abs lb" style="left:38px;top:676.5px">Miles</div>
<div class="rad" style="left:84.5px;top:677.5px"></div>
<div class="abs lb" style="left:102px;top:676.5px">Meter</div>
<div class="abs lb" style="left:371px;top:643px;width:200px;text-align:center">One Inch = 64.9 Km</div>
<div class="abs" style="left:210px;top:674px;width:74.4857px;height:4px;background:#000"></div>
<div class="abs" style="left:284.286px;top:674px;width:74.4857px;height:4px;background:#ff0000"></div>
<div class="abs" style="left:358.571px;top:674px;width:74.4857px;height:4px;background:#000"></div>
<div class="abs" style="left:432.857px;top:674px;width:74.4857px;height:4px;background:#ff0000"></div>
<div class="abs" style="left:507.143px;top:674px;width:74.4857px;height:4px;background:#000"></div>
<div class="abs" style="left:581.429px;top:674px;width:74.4857px;height:4px;background:#ff0000"></div>
<div class="abs" style="left:655.714px;top:674px;width:74.4857px;height:4px;background:#000"></div>
<div class="abs lb" style="left:211px;top:679px">Km</div>
<div class="abs lb" style="left:264.286px;top:679px;width:40px;text-align:center">50</div>
<div class="abs lb" style="left:338.571px;top:679px;width:40px;text-align:center">100</div>
<div class="abs lb" style="left:412.857px;top:679px;width:40px;text-align:center">150</div>
<div class="abs lb" style="left:487.143px;top:679px;width:40px;text-align:center">200</div>
<div class="abs lb" style="left:561.429px;top:679px;width:40px;text-align:center">250</div>
<div class="abs lb" style="left:635.714px;top:679px;width:40px;text-align:center">300</div>
<div class="abs lb" style="left:690px;top:679px;width:40px;text-align:right">350</div>
<div class="panel" style="left:764px;top:633px;width:51px;height:78px;"><svg width="49" height="75" viewBox="765 634 49 75">
<path d="M789.5 638 V664" stroke="#a8a8a8" stroke-width="1.2" fill="none"/><path d="M785 643 L789.5 637.5 L794 643" stroke="#a8a8a8" stroke-width="1.2" fill="none"/>
<path d="M812.5 638 V668" stroke="#d0d0d0" stroke-width="1.5" stroke-dasharray="1 1.5"/>
<circle cx="789.5" cy="685.5" r="20" fill="none" stroke="#909090" stroke-width="1.2" stroke-dasharray="1 2"/>
<path d="M779 673.5 A16 16 0 0 1 800 673.5" stroke="#d83030" stroke-width="2.4" fill="none"/>
<path d="M776 693 A16 16 0 0 1 776 678" stroke="#202020" stroke-width="2.6" fill="none"/>
<path d="M803 678 A16 16 0 0 1 803 693" stroke="#202020" stroke-width="2.6" fill="none"/>
<path d="M780 698.5 A16 16 0 0 0 799 698.5" stroke="#202020" stroke-width="2.6" fill="none"/>
<path d="M789.5 672 L791.3 685.5 H787.7 Z" fill="#d83030"/><path d="M789.5 699 L791.3 685.5 H787.7 Z" fill="#8c98a8"/>
</svg></div>
<div class="panel" style="left:820px;top:633px;width:201px;height:78px;"><svg width="199" height="76" viewBox="821 634 199 76" style="position:absolute;left:0;top:0">
<rect x="832" y="643.5" width="26.5" height="17.5" fill="#28288c"/><circle cx="850.90" cy="652.20" r="0.8" fill="#f8e040"/><circle cx="850.15" cy="655.00" r="0.8" fill="#f8e040"/><circle cx="848.10" cy="657.05" r="0.8" fill="#f8e040"/><circle cx="845.30" cy="657.80" r="0.8" fill="#f8e040"/><circle cx="842.50" cy="657.05" r="0.8" fill="#f8e040"/><circle cx="840.45" cy="655.00" r="0.8" fill="#f8e040"/><circle cx="839.70" cy="652.20" r="0.8" fill="#f8e040"/><circle cx="840.45" cy="649.40" r="0.8" fill="#f8e040"/><circle cx="842.50" cy="647.35" r="0.8" fill="#f8e040"/><circle cx="845.30" cy="646.60" r="0.8" fill="#f8e040"/><circle cx="848.10" cy="647.35" r="0.8" fill="#f8e040"/><circle cx="850.15" cy="649.40" r="0.8" fill="#f8e040"/>
<path d="M911 643.5 Q920 640 929 643.5 V654 Q929 660 920 664 Q911 660 911 654 Z" fill="#38a038" stroke="#d8d040" stroke-width="1"/>
<path d="M913.5 646.5 H926.5" stroke="#704020" stroke-width="2"/><ellipse cx="920" cy="653.5" rx="5.2" ry="4.2" fill="#e8e8b0" stroke="#205020" stroke-width="0.8"/><ellipse cx="920" cy="654" rx="3" ry="2" fill="#5080c0"/>
<circle cx="998.5" cy="652.5" r="10.3" fill="#e08830" stroke="#a86020" stroke-width="1"/>
<path d="M998.5 644 L1003.5 651 H1001 L1004.5 656 H992.5 L996 651 H993.5 Z" fill="#287038"/><rect x="997.6" y="655" width="1.8" height="4" fill="#205028"/><path d="M991 659.5 Q998.5 662.5 1006 659.5" stroke="#287038" stroke-width="1.6" fill="none"/>
</svg><div class="lt" style="top:31px;transform:scaleX(0.906)">South Sumatra Forest Fire</div><div class="lt" style="top:51px;transform:scaleX(0.933)">Management Project</div></div>
<div class="st" style="left:0;width:167px"><span style="left:6px">Skala 1 : 2,539,548</span></div>
<div class="st" style="left:170px;width:537px"><span style="left:7px;white-space:pre">Bujur: 101.69  Lintang: -1.62</span></div>
<div class="cb" style="left:641px;top:720px"><svg width="9" height="9" viewBox="0 0 9 9"><path d="M1 3.2 L3.3 5.6 L8 1 V3.2 L3.3 7.9 L1 5.6 Z" fill="#000"/></svg></div><div class="abs lb" style="left:658px;top:720px">Info Peta</div>
<div class="abs" style="left:709px;top:717px;width:117px;height:20px;background:#fff;border:1px solid;border-color:#909090 #fff #fff #909090;box-sizing:border-box;box-shadow:inset 1px 1px 0 #707070;"><span class="abs lb" style="left:5px;top:3px">kebakaran</span><div class="abs" style="right:1px;top:2px;width:15px;height:15px;background:#ece9ec;border:1px solid;border-color:#fff #707070 #707070 #fff;box-sizing:border-box;"><svg width="13" height="13" style="position:absolute;left:0;top:0"><path d="M3 5 H10 L6.5 8.5 Z" fill="#000"/></svg></div></div>
<div class="abs" style="left:828px;top:717px;width:116px;height:20px;background:#fff;border:1px solid;border-color:#909090 #fff #fff #909090;box-sizing:border-box;box-shadow:inset 1px 1px 0 #707070;"><span class="abs lb" style="left:5px;top:3px">KELAS_DRK</span><div class="abs" style="right:1px;top:2px;width:15px;height:15px;background:#ece9ec;border:1px solid;border-color:#fff #707070 #707070 #fff;box-sizing:border-box;"><svg width="13" height="13" style="position:absolute;left:0;top:0"><path d="M3 5 H10 L6.5 8.5 Z" fill="#000"/></svg></div></div>
<div class="st" style="left:948px;width:57px;top:716px;height:22px"><span style="left:6px">11:09 AM</span></div>
</div>
</body>
</html>
